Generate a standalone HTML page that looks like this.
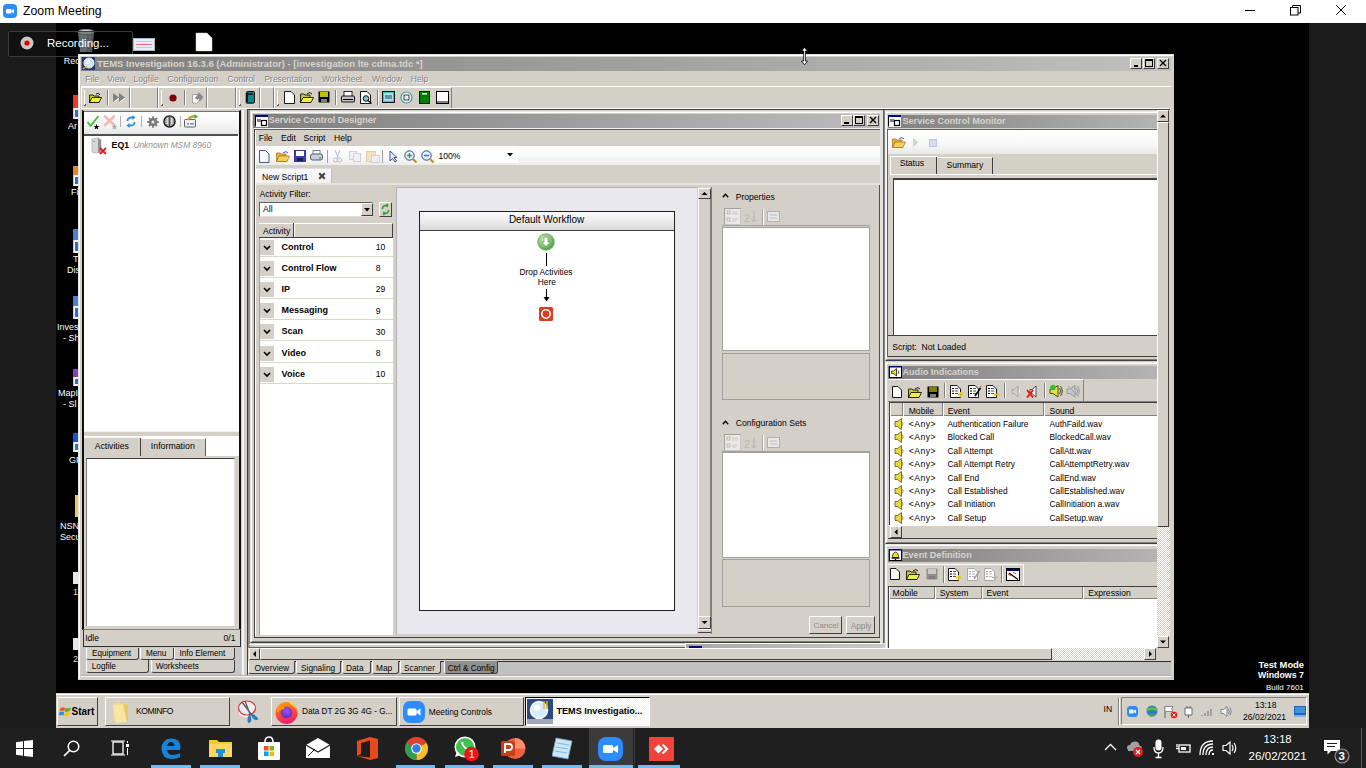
<!DOCTYPE html><html><head><meta charset="utf-8"><style>
html,body{margin:0;padding:0;width:1366px;height:768px;overflow:hidden;background:#000;}
body{position:relative;font-family:"Liberation Sans",sans-serif;}
div,span,svg{position:absolute;}
span{white-space:nowrap;}
</style></head><body>
<div style="left:0px;top:0px;width:1366px;height:23px;background:#fff"></div>
<div style="left:3px;top:4px;width:14px;height:14px;background:#2d8cff;border-radius:4px"></div>
<svg style="position:absolute;left:3px;top:4px;" width="14" height="14" viewBox="0 0 14 14"><rect x="3" y="5" width="5.5" height="4.5" rx="1" fill="#fff"/><path d="M8.5 6.5 L11 5 V9.5 L8.5 8 Z" fill="#fff"/></svg>
<span style="left:23px;top:5.39px;font-size:12.3px;line-height:12.3px;color:#000;">Zoom Meeting</span>
<div style="left:1245px;top:10px;width:10px;height:1px;background:#000"></div>
<svg style="position:absolute;left:1290px;top:5px;" width="11" height="11" viewBox="0 0 11 11"><rect x="0.5" y="2.5" width="7.5" height="7.5" fill="none" stroke="#000"/><path d="M2.5 2.5 V0.5 H10.5 V8 H8" fill="none" stroke="#000"/></svg>
<svg style="position:absolute;left:1336px;top:5px;" width="10" height="10" viewBox="0 0 10 10"><path d="M0.3 0.3 L9.7 9.7 M9.7 0.3 L0.3 9.7" stroke="#000" stroke-width="1"/></svg>
<div style="left:0px;top:23px;width:56px;height:705px;background:#1b1b1b"></div>
<div style="left:1309px;top:23px;width:57px;height:705px;background:#1b1b1b"></div>
<div style="left:56px;top:23px;width:1253px;height:670px;background:#000"></div>
<svg style="position:absolute;left:76px;top:28px;" width="20" height="25" viewBox="0 0 20 25"><path d="M2 4 L18 4 L16 24 L4 24 Z" fill="#9a9fa6"/><path d="M10 4 L18 4 L16 24 L10 24 Z" fill="#70757c" opacity="0.6"/><ellipse cx="10" cy="4" rx="8.3" ry="2.6" fill="#c8ccd2" stroke="#80848a" stroke-width="0.9"/><path d="M6 7 L7 20 M10 7 V21 M14 7 L13 20" stroke="#b8bec6" stroke-width="0.9"/></svg>
<span style="left:63.8px;top:56.58px;font-size:9px;line-height:9px;color:#fff;">Rec</span>
<div style="left:133px;top:38px;width:22px;height:13px;background:#e8eef6;border:1px solid #b0b8c8;box-sizing:border-box"></div>
<div style="left:136px;top:44px;width:16px;height:1px;background:#e07070"></div>
<div style="left:136px;top:41px;width:16px;height:1px;background:#c0cce0"></div>
<div style="left:136px;top:47px;width:16px;height:1px;background:#c0cce0"></div>
<svg style="position:absolute;left:195px;top:32px;" width="18" height="20" viewBox="0 0 18 20"><path d="M1 1 H12 L17 6 V19 H1 Z" fill="#fff" stroke="#ccc" stroke-width="0.5"/></svg>
<div style="left:73px;top:95px;width:5px;height:13px;background:#e83a2a"></div>
<div style="left:73px;top:108px;width:5px;height:11px;background:#f4f4f8;border-left:1px solid #c0c8d8;box-sizing:border-box"></div>
<div style="left:75px;top:110px;width:3px;height:7px;background:#2a70d0"></div>
<div style="left:73px;top:166px;width:5px;height:9px;background:#f08030"></div>
<div style="left:73px;top:175px;width:5px;height:11px;background:#f4f4f8;border-left:1px solid #c0c8d8;box-sizing:border-box"></div>
<div style="left:75px;top:177px;width:3px;height:7px;background:#2a70d0"></div>
<div style="left:73px;top:229px;width:5px;height:11px;background:#4a80d0"></div>
<div style="left:73px;top:240px;width:5px;height:13px;background:#f4f4f8;border-left:1px solid #c0c8d8;box-sizing:border-box"></div>
<div style="left:75px;top:242px;width:3px;height:9px;background:#2a70d0"></div>
<div style="left:73px;top:296px;width:5px;height:10px;background:#4a80d0"></div>
<div style="left:73px;top:306px;width:5px;height:13px;background:#f4f4f8;border-left:1px solid #c0c8d8;box-sizing:border-box"></div>
<div style="left:75px;top:308px;width:3px;height:9px;background:#2a70d0"></div>
<div style="left:73px;top:369px;width:5px;height:8px;background:#8a40b8"></div>
<div style="left:73px;top:377px;width:5px;height:9px;background:#f4f4f8;border-left:1px solid #c0c8d8;box-sizing:border-box"></div>
<div style="left:75px;top:379px;width:3px;height:5px;background:#2a70d0"></div>
<div style="left:73px;top:433px;width:5px;height:9px;background:#2050d0"></div>
<div style="left:73px;top:442px;width:5px;height:10px;background:#f4f4f8;border-left:1px solid #c0c8d8;box-sizing:border-box"></div>
<div style="left:75px;top:444px;width:3px;height:6px;background:#2a70d0"></div>
<div style="left:75px;top:495px;width:3px;height:22px;background:#e8c868"></div>
<div style="left:73px;top:572px;width:5px;height:12px;background:#e8e8e8"></div>
<div style="left:73px;top:638px;width:5px;height:12px;background:#e8e8e8"></div>
<span style="left:68px;top:122.38px;font-size:9px;line-height:9px;color:#fff;">Ar</span>
<span style="left:71px;top:188.38px;font-size:9px;line-height:9px;color:#fff;">Fi</span>
<span style="left:73px;top:255.38px;font-size:9px;line-height:9px;color:#fff;">T</span>
<span style="left:67px;top:266.38px;font-size:9px;line-height:9px;color:#fff;">Dis</span>
<span style="left:57px;top:323.38px;font-size:9px;line-height:9px;color:#fff;">Inves</span>
<span style="left:63px;top:334.38px;font-size:9px;line-height:9px;color:#fff;">- Sh</span>
<span style="left:58px;top:389.38px;font-size:9px;line-height:9px;color:#fff;">MapI</span>
<span style="left:63px;top:400.38px;font-size:9px;line-height:9px;color:#fff;">- Sl</span>
<span style="left:69px;top:456.38px;font-size:9px;line-height:9px;color:#fff;">GP</span>
<span style="left:60px;top:522.38px;font-size:9px;line-height:9px;color:#fff;">NSN</span>
<span style="left:60px;top:533.38px;font-size:9px;line-height:9px;color:#fff;">Secu</span>
<span style="left:73px;top:588.38px;font-size:9px;line-height:9px;color:#ddd;">1</span>
<span style="left:73px;top:654.88px;font-size:9px;line-height:9px;color:#ddd;">2</span>
<div style="left:8px;top:31px;width:125px;height:26px;background:rgba(0,0,0,0.35);border:1px solid #3a3a3a;border-radius:2px;box-sizing:border-box"></div>
<svg style="position:absolute;left:20px;top:36px;" width="14" height="14" viewBox="0 0 14 14"><circle cx="7" cy="7" r="6.5" fill="#c8c8c8"/><circle cx="7" cy="7" r="2.6" fill="#e00000"/></svg>
<span style="left:47px;top:37.57px;font-size:11.5px;line-height:11.5px;color:#fff;">Recording...</span>
<div style="left:78px;top:54px;width:1096px;height:626px;background:#d4d0c8;border-top:1px solid #e4e2dc;border-left:1px solid #e4e2dc;box-sizing:border-box"></div>
<div style="left:79px;top:55px;width:1094px;height:624px;border-top:1px solid #fff;border-left:1px solid #fff;box-sizing:border-box"></div>
<div style="left:81px;top:57px;width:1090px;height:14px;background:linear-gradient(90deg,#808080,#c0c0c0)"></div>
<svg style="position:absolute;left:82px;top:57px;" width="13" height="13" viewBox="0 0 13 13"><rect x="0" y="0" width="13" height="13" fill="#2a3a6a"/><circle cx="7" cy="6" r="5" fill="#cfe4f4" stroke="#f0f0f0" stroke-width="1"/><circle cx="6" cy="5" r="2" fill="#fff"/><path d="M1 12 L5 9" stroke="#e0b040" stroke-width="1.5"/></svg>
<span style="left:97px;top:59.16px;font-size:9.5px;line-height:9.5px;color:#d8d4cc;font-weight:bold;">TEMS Investigation 16.3.6 (Administrator) - [investigation lte cdma.tdc *]</span>
<div style="left:1130px;top:58px;width:12px;height:11px;background:#d4d0c8;border-top:1px solid #fff;border-left:1px solid #fff;border-right:1px solid #404040;border-bottom:1px solid #404040;box-sizing:border-box;"></div>
<div style="left:1143px;top:58px;width:12px;height:11px;background:#d4d0c8;border-top:1px solid #fff;border-left:1px solid #fff;border-right:1px solid #404040;border-bottom:1px solid #404040;box-sizing:border-box;"></div>
<div style="left:1157px;top:58px;width:12px;height:11px;background:#d4d0c8;border-top:1px solid #fff;border-left:1px solid #fff;border-right:1px solid #404040;border-bottom:1px solid #404040;box-sizing:border-box;"></div>
<svg style="position:absolute;left:1130px;top:58px;" width="12" height="11" viewBox="0 0 12 11"><rect x="4" y="7" width="4" height="2" fill="#000"/></svg>
<svg style="position:absolute;left:1143px;top:58px;" width="12" height="11" viewBox="0 0 12 11"><rect x="2.5" y="1.5" width="7" height="7" fill="none" stroke="#000"/><rect x="2" y="1" width="8" height="2" fill="#000"/></svg>
<svg style="position:absolute;left:1157px;top:58px;" width="12" height="11" viewBox="0 0 12 11"><path d="M3 2 L9 8 M9 2 L3 8" stroke="#000" stroke-width="1.4"/></svg>
<span style="left:85.89999999999999px;top:75.60px;font-size:8.5px;line-height:8.5px;color:#fff;">File</span>
<span style="left:85.3px;top:75.00px;font-size:8.5px;line-height:8.5px;color:#808080;">File</span>
<span style="left:107.89999999999999px;top:75.60px;font-size:8.5px;line-height:8.5px;color:#fff;">View</span>
<span style="left:107.3px;top:75.00px;font-size:8.5px;line-height:8.5px;color:#808080;">View</span>
<span style="left:134.2px;top:75.60px;font-size:8.5px;line-height:8.5px;color:#fff;">Logfile</span>
<span style="left:133.6px;top:75.00px;font-size:8.5px;line-height:8.5px;color:#808080;">Logfile</span>
<span style="left:168.2px;top:75.60px;font-size:8.5px;line-height:8.5px;color:#fff;">Configuration</span>
<span style="left:167.6px;top:75.00px;font-size:8.5px;line-height:8.5px;color:#808080;">Configuration</span>
<span style="left:228.2px;top:75.60px;font-size:8.5px;line-height:8.5px;color:#fff;">Control</span>
<span style="left:227.6px;top:75.00px;font-size:8.5px;line-height:8.5px;color:#808080;">Control</span>
<span style="left:265.0px;top:75.60px;font-size:8.5px;line-height:8.5px;color:#fff;">Presentation</span>
<span style="left:264.4px;top:75.00px;font-size:8.5px;line-height:8.5px;color:#808080;">Presentation</span>
<span style="left:322.6px;top:75.60px;font-size:8.5px;line-height:8.5px;color:#fff;">Worksheet</span>
<span style="left:322px;top:75.00px;font-size:8.5px;line-height:8.5px;color:#808080;">Worksheet</span>
<span style="left:372.6px;top:75.60px;font-size:8.5px;line-height:8.5px;color:#fff;">Window</span>
<span style="left:372px;top:75.00px;font-size:8.5px;line-height:8.5px;color:#808080;">Window</span>
<span style="left:411.40000000000003px;top:75.60px;font-size:8.5px;line-height:8.5px;color:#fff;">Help</span>
<span style="left:410.8px;top:75.00px;font-size:8.5px;line-height:8.5px;color:#808080;">Help</span>
<div style="left:81px;top:86px;width:1090px;height:1px;background:#fff"></div>
<div style="left:81px;top:87px;width:49px;height:21px;border-top:1px solid #fff;border-left:1px solid #fff;border-right:1px solid #808080;box-sizing:border-box"></div>
<div style="left:84px;top:90px;width:1px;height:16px;background:#fff"></div>
<div style="left:85px;top:104px;width:1px;height:2px;background:#606060"></div>
<div style="left:84px;top:105px;width:2px;height:1px;background:#606060"></div>
<div style="left:130px;top:87px;width:28px;height:21px;border-top:1px solid #fff;border-left:1px solid #fff;border-right:1px solid #808080;box-sizing:border-box"></div>
<div style="left:158px;top:87px;width:49px;height:21px;border-top:1px solid #fff;border-left:1px solid #fff;border-right:1px solid #808080;box-sizing:border-box"></div>
<div style="left:161px;top:90px;width:1px;height:16px;background:#fff"></div>
<div style="left:162px;top:104px;width:1px;height:2px;background:#606060"></div>
<div style="left:161px;top:105px;width:2px;height:1px;background:#606060"></div>
<div style="left:207px;top:87px;width:29px;height:21px;border-top:1px solid #fff;border-left:1px solid #fff;border-right:1px solid #808080;box-sizing:border-box"></div>
<div style="left:236px;top:87px;width:24px;height:21px;border-top:1px solid #fff;border-left:1px solid #fff;border-right:1px solid #808080;box-sizing:border-box"></div>
<div style="left:239px;top:90px;width:1px;height:16px;background:#fff"></div>
<div style="left:240px;top:104px;width:1px;height:2px;background:#606060"></div>
<div style="left:239px;top:105px;width:2px;height:1px;background:#606060"></div>
<div style="left:260px;top:87px;width:14px;height:21px;border-top:1px solid #fff;border-left:1px solid #fff;border-right:1px solid #808080;box-sizing:border-box"></div>
<div style="left:274px;top:87px;width:178px;height:21px;border-top:1px solid #fff;border-left:1px solid #fff;border-right:1px solid #808080;box-sizing:border-box"></div>
<div style="left:277px;top:90px;width:1px;height:16px;background:#fff"></div>
<div style="left:278px;top:104px;width:1px;height:2px;background:#606060"></div>
<div style="left:277px;top:105px;width:2px;height:1px;background:#606060"></div>
<div style="left:81px;top:108px;width:1090px;height:1px;background:#fff"></div>
<svg style="position:absolute;left:89px;top:92px;" width="13" height="11" viewBox="0 0 13 11"><path d="M0.5 3 H4 L5 4 H10 V10.5 H0.5 Z" fill="#c8c820" stroke="#000" stroke-width="0.8"/><path d="M0.5 10.5 L3 5.5 H12.5 L10 10.5 Z" fill="#f0f040" stroke="#000" stroke-width="0.8"/><path d="M7 2 Q10 0 11 3" stroke="#000" fill="none" stroke-width="0.9"/></svg>
<div style="left:107px;top:90px;width:2px;height:15px;border-left:1px solid #808080;border-right:1px solid #fff;box-sizing:border-box"></div>
<svg style="position:absolute;left:113px;top:92px;" width="13" height="11" viewBox="0 0 13 11"><path d="M0 1 L6 5.5 L0 10 Z M6 1 L12 5.5 L6 10 Z" fill="#808080"/><path d="M1 10 L6 6 M7 10 L12 6" stroke="#fff" stroke-width="0.8"/></svg>
<svg style="position:absolute;left:169px;top:94px;" width="8" height="8" viewBox="0 0 8 8"><circle cx="4" cy="4" r="3.6" fill="#800000"/></svg>
<div style="left:184px;top:90px;width:2px;height:15px;border-left:1px solid #808080;border-right:1px solid #fff;box-sizing:border-box"></div>
<svg style="position:absolute;left:191px;top:91px;" width="13" height="13" viewBox="0 0 13 13"><path d="M1.5 3.5 H7 V12 H1.5 Z" fill="#fff" stroke="#a0a0a0" stroke-width="0.9"/><path d="M4 7 L8 1.5 L12.5 6 L9 10.5 Z" fill="#8a8a8a"/><path d="M5 12 L8 8" stroke="#fff" stroke-width="1"/></svg>
<svg style="position:absolute;left:245px;top:91px;" width="10" height="13" viewBox="0 0 10 13"><path d="M1 12.5 H8.5 M0.8 2 V12" stroke="#e040e0" stroke-width="1"/><rect x="1.5" y="0.5" width="8" height="11.5" rx="1" fill="#108888" stroke="#000" stroke-width="0.9"/><rect x="3" y="2.5" width="5" height="1.2" fill="#000"/><path d="M2.5 1.5 V11" stroke="#000" stroke-width="0.8"/></svg>
<svg style="position:absolute;left:284px;top:91px;" width="11" height="13" viewBox="0 0 11 13"><path d="M0.5 0.5 H7 L10.5 4 V12.5 H0.5 Z" fill="#fff" stroke="#000" stroke-width="0.9"/></svg>
<svg style="position:absolute;left:300px;top:91px;" width="14" height="12" viewBox="0 0 14 12"><path d="M0.5 3 H4 L5 4 H10 V11.5 H0.5 Z" fill="#c8c820" stroke="#000" stroke-width="0.8"/><path d="M0.5 11.5 L3 6.5 H13.5 L11 11.5 Z" fill="#f0f040" stroke="#000" stroke-width="0.8"/><path d="M7 3 Q10 0 12 3" stroke="#000" fill="none" stroke-width="0.9"/></svg>
<svg style="position:absolute;left:318px;top:91px;" width="12" height="12" viewBox="0 0 12 12"><rect x="0.5" y="0.5" width="11" height="11" fill="#000"/><rect x="2" y="1" width="8" height="5" fill="#c0c000"/><rect x="3" y="8" width="6" height="3" fill="#808080"/></svg>
<div style="left:335px;top:90px;width:2px;height:15px;border-left:1px solid #808080;border-right:1px solid #fff;box-sizing:border-box"></div>
<svg style="position:absolute;left:341px;top:91px;" width="14" height="13" viewBox="0 0 14 13"><rect x="3" y="0.5" width="8" height="5" fill="#fff" stroke="#000" stroke-width="0.8"/><rect x="0.5" y="5" width="13" height="6" rx="1" fill="#c0c0c0" stroke="#000" stroke-width="0.9"/><rect x="2" y="8" width="10" height="1" fill="#000"/></svg>
<svg style="position:absolute;left:360px;top:91px;" width="12" height="13" viewBox="0 0 12 13"><path d="M0.5 0.5 H7 L10.5 4 V12.5 H0.5 Z" fill="#fff" stroke="#000" stroke-width="0.9"/><circle cx="6" cy="7.5" r="2.8" fill="#80c0d0" stroke="#000" stroke-width="0.9"/><path d="M8 9.5 L11.5 12.5" stroke="#000" stroke-width="1.3"/></svg>
<div style="left:377px;top:90px;width:2px;height:15px;border-left:1px solid #808080;border-right:1px solid #fff;box-sizing:border-box"></div>
<svg style="position:absolute;left:382px;top:91px;" width="13" height="12" viewBox="0 0 13 12"><rect x="0.5" y="0.5" width="12" height="11" fill="#40c0d0" stroke="#000" stroke-width="0.9"/><rect x="2" y="2" width="9" height="8" fill="#a0e0e8"/><path d="M3 5 H10 M3 7 H10" stroke="#000" stroke-width="0.7"/></svg>
<svg style="position:absolute;left:400px;top:91px;" width="13" height="13" viewBox="0 0 13 13"><circle cx="6.5" cy="6.5" r="5.5" fill="#e8f0f0" stroke="#40a0a0" stroke-width="1.2"/><path d="M4 4 H9 V9 H4 Z" fill="none" stroke="#000" stroke-width="0.7"/></svg>
<svg style="position:absolute;left:419px;top:91px;" width="11" height="13" viewBox="0 0 11 13"><rect x="0.5" y="0.5" width="10" height="12" fill="#008000" stroke="#000" stroke-width="0.9"/><rect x="3" y="2" width="5" height="1.5" fill="#fff"/></svg>
<svg style="position:absolute;left:436px;top:91px;" width="13" height="13" viewBox="0 0 13 13"><rect x="0.5" y="0.5" width="12" height="12" fill="#fff" stroke="#000" stroke-width="1"/><rect x="1" y="10" width="11" height="2" fill="#808080"/></svg>
<div style="left:82px;top:110px;width:159px;height:520px;border:2px solid #101010;border-top:1px solid #d4d0c8;box-sizing:border-box;background:#fff"></div>
<div style="left:84px;top:111px;width:155px;height:1px;background:#707070"></div>
<div style="left:84px;top:112px;width:155px;height:23px;background:linear-gradient(180deg,#ffffff 0%,#f4f4f4 60%,#e4e4e4 100%)"></div>
<div style="left:84px;top:134px;width:154px;height:2px;background:#505050"></div>
<svg style="position:absolute;left:86px;top:114px;" width="14" height="15" viewBox="0 0 14 15"><path d="M1.5 8 L4.5 12 L12.5 2" stroke="#40c040" stroke-width="1.9" fill="none" stroke-linejoin="round"/><g transform="translate(10.5 12) scale(1.5) translate(-10.5 -12)"><path d="M10.5 10.5 L11 12 L12.6 12 L11.3 12.9 L11.8 14.4 L10.5 13.5 L9.2 14.4 L9.7 12.9 L8.4 12 L10 12 Z" fill="#000"/></g></svg>
<svg style="position:absolute;left:103px;top:114px;" width="14" height="15" viewBox="0 0 14 15"><path d="M2 2.5 L11 11 M11 2.5 L2 11" stroke="#f4b8b8" stroke-width="2.6" stroke-linecap="round"/><g transform="translate(11.5 12) scale(1.5) translate(-11.5 -12)"><path d="M11.5 10.5 L12 12 L13.6 12 L12.3 12.9 L12.8 14.4 L11.5 13.5 L10.2 14.4 L10.7 12.9 L9.4 12 L11 12 Z" fill="#a8a8a8"/></g></svg>
<div style="left:120px;top:116px;width:1px;height:11px;background:#b0b0b0"></div>
<svg style="position:absolute;left:126px;top:115px;" width="10" height="13" viewBox="0 0 10 13"><path d="M1.5 6 Q1.5 2.5 5.5 2.5 L7 2.5" stroke="#2a90e0" stroke-width="1.8" fill="none"/><path d="M6.5 0 L9.5 2.5 L6.5 5 Z" fill="#2a90e0"/><path d="M8.5 7 Q8.5 10.5 4.5 10.5 L3 10.5" stroke="#2a90e0" stroke-width="1.8" fill="none"/><path d="M3.5 8 L0.5 10.5 L3.5 13 Z" fill="#2a90e0"/></svg>
<div style="left:141px;top:116px;width:1px;height:11px;background:#b0b0b0"></div>
<svg style="position:absolute;left:147px;top:116px;" width="12" height="12" viewBox="0 0 12 12"><path d="M11.73 5.09 L11.73 6.91 L10.08 6.98 L9.58 8.19 L10.69 9.41 L9.41 10.69 L8.19 9.58 L6.98 10.08 L6.91 11.73 L5.09 11.73 L5.02 10.08 L3.81 9.58 L2.59 10.69 L1.31 9.41 L2.42 8.19 L1.92 6.98 L0.27 6.91 L0.27 5.09 L1.92 5.02 L2.42 3.81 L1.31 2.59 L2.59 1.31 L3.81 2.42 L5.02 1.92 L5.09 0.27 L6.91 0.27 L6.98 1.92 L8.19 2.42 L9.41 1.31 L10.69 2.59 L9.58 3.81 L10.08 5.02 Z" fill="#7a7a7a"/><circle cx="6" cy="6" r="1.6" fill="#e8e8e8"/></svg>
<svg style="position:absolute;left:163px;top:115px;" width="13" height="13" viewBox="0 0 13 13"><circle cx="6.5" cy="6.5" r="5.6" fill="#a0a0a0" stroke="#101010" stroke-width="1.3"/><path d="M4.3 3 V10 M8.7 3 V10" stroke="#f4f4f4" stroke-width="1.4" stroke-dasharray="1.4 0.9"/><path d="M6.5 1 V12" stroke="#404040" stroke-width="0.9"/></svg>
<div style="left:180px;top:116px;width:1px;height:11px;background:#b0b0b0"></div>
<svg style="position:absolute;left:184px;top:114px;" width="14" height="14" viewBox="0 0 14 14"><rect x="0.5" y="5.5" width="11" height="7.5" rx="1" fill="#eef0f8" stroke="#505050" stroke-width="0.9"/><rect x="3" y="9" width="2" height="1.5" fill="#8090b0"/><rect x="6" y="9" width="4" height="1.5" fill="#8090b0"/><path d="M4 6 Q6 2 11 2.5" stroke="#c8a030" stroke-width="2.4" fill="none"/><path d="M10.5 0 L14 2.5 L10.5 5 Z" fill="#40b040"/></svg>
<svg style="position:absolute;left:89px;top:137px;" width="19" height="18" viewBox="0 0 19 18"><path d="M3 2 L9 1 L12 3 V15 L6 16 L3 15 Z" fill="#d8d8d8" stroke="#a0a0a0" stroke-width="0.6"/><path d="M9 1 L12 3 V15 L9 16 Z" fill="#909090"/><rect x="4" y="4" width="2" height="1" fill="#70c040"/><path d="M11 11 L17 17 M17 11 L11 17" stroke="#e02020" stroke-width="1.8"/></svg>
<span style="left:111.6px;top:140.94px;font-size:8.7px;line-height:8.7px;color:#000;font-weight:bold;">EQ1</span>
<span style="left:133.4px;top:141.19px;font-size:8.4px;line-height:8.4px;color:#909090;font-style:italic;">Unknown MSM 8960</span>
<div style="left:84px;top:431px;width:155px;height:5px;background:#d4d0c8;border-top:1px solid #f0f0f0;box-sizing:border-box"></div>
<div style="left:84px;top:436px;width:155px;height:22px;background:#fff"></div>
<div style="left:84px;top:437px;width:56px;height:21px;background:#d4d0c8;border-top:1px solid #f4f4f4;box-sizing:border-box"></div>
<div style="left:140px;top:438px;width:1px;height:18px;background:#404040"></div>
<div style="left:141px;top:438px;width:65px;height:18px;background:#d4d0c8;border-top:1px solid #fff;border-right:1px solid #606060;box-sizing:border-box"></div>
<span style="left:94.8px;top:441.72px;font-size:8.6px;line-height:8.6px;color:#000;">Activities</span>
<span style="left:150.8px;top:441.55px;font-size:8.8px;line-height:8.8px;color:#000;">Information</span>
<div style="left:84px;top:456px;width:155px;height:3px;background:#d4d0c8"></div>
<div style="left:84px;top:458px;width:155px;height:171px;background:#d4d0c8"></div>
<div style="left:86px;top:458px;width:149px;height:168px;background:#fff;border-top:1px solid #404040;border-left:1px solid #808080;border-right:1px solid #e0e0e0;box-sizing:border-box"></div>
<div style="left:84px;top:626px;width:155px;height:3px;background:#d4d0c8"></div>
<div style="left:83px;top:629px;width:158px;height:18px;background:#d4d0c8;border-top:1px solid #808080;border-bottom:1px solid #303030;border-left:1px solid #303030;border-right:1px solid #303030;box-sizing:border-box"></div>
<span style="left:85.2px;top:634.22px;font-size:8.6px;line-height:8.6px;color:#000;">Idle</span>
<span style="left:223.5px;top:634.22px;font-size:8.6px;line-height:8.6px;color:#000;">0/1</span>
<div style="left:81px;top:647px;width:166px;height:28px;background:#c8c8c8"></div>
<div style="left:234px;top:647px;width:7px;height:28px;background:#c8c8c8"></div>
<div style="left:86px;top:648px;width:53px;height:12px;background:#d4d0c8;border-left:1px solid #fff;border-right:1px solid #404040;border-bottom:1px solid #404040;border-radius:0 0 3px 3px;box-sizing:border-box"></div>
<span style="left:92px;top:650.36px;font-size:8.2px;line-height:8.2px;color:#000;">Equipment</span>
<div style="left:140px;top:648px;width:34px;height:12px;background:#d4d0c8;border-left:1px solid #fff;border-right:1px solid #404040;border-bottom:1px solid #404040;border-radius:0 0 3px 3px;box-sizing:border-box"></div>
<span style="left:145.9px;top:650.36px;font-size:8.2px;line-height:8.2px;color:#000;">Menu</span>
<div style="left:174px;top:648px;width:61px;height:12px;background:#d4d0c8;border-left:1px solid #fff;border-right:1px solid #404040;border-bottom:1px solid #404040;border-radius:0 0 3px 3px;box-sizing:border-box"></div>
<span style="left:179.4px;top:650.36px;font-size:8.2px;line-height:8.2px;color:#000;">Info Element</span>
<div style="left:86px;top:660px;width:63px;height:13px;background:#d4d0c8;border-left:1px solid #fff;border-right:1px solid #404040;border-bottom:1px solid #404040;border-radius:0 0 3px 3px;box-sizing:border-box"></div>
<span style="left:91.8px;top:663.36px;font-size:8.2px;line-height:8.2px;color:#000;">Logfile</span>
<div style="left:151px;top:660px;width:84px;height:13px;background:#d4d0c8;border-left:1px solid #fff;border-right:1px solid #404040;border-bottom:1px solid #404040;border-radius:0 0 3px 3px;box-sizing:border-box"></div>
<span style="left:155.7px;top:663.36px;font-size:8.2px;line-height:8.2px;color:#000;">Worksheets</span>
<div style="left:241px;top:109px;width:930px;height:571px;background:#d4d0c8"></div>
<div style="left:247px;top:109px;width:923px;height:1px;background:#404040"></div>
<div style="left:247px;top:109px;width:1px;height:566px;background:#404040"></div>
<div style="left:248px;top:110px;width:2px;height:538px;background:#8c8c8c"></div>
<div style="left:242px;top:110px;width:2px;height:565px;background:#f4f4f4"></div>
<div style="left:250px;top:111px;width:634px;height:532px;background:#d4d0c8;border-top:1px solid #e8e8e8;border-left:1px solid #e8e8e8;border-right:1px solid #404040;border-bottom:1px solid #404040;box-sizing:border-box"></div>
<div style="left:251px;top:112px;width:632px;height:530px;border-top:1px solid #fff;border-left:1px solid #fff;border-right:1px solid #808080;border-bottom:1px solid #808080;box-sizing:border-box"></div>
<div style="left:253px;top:114px;width:627px;height:14px;background:linear-gradient(90deg,#808080 0%,#bcbcc0 100%)"></div>
<svg style="position:absolute;left:255px;top:115px;" width="13" height="12" viewBox="0 0 13 12"><rect x="0" y="0" width="13" height="12" fill="#fff"/><rect x="0" y="0" width="13" height="2" fill="#0000a0"/><path d="M0.5 2 V11.5" stroke="#000"/><rect x="2" y="4" width="4" height="3" fill="#808080"/><rect x="6.5" y="5.5" width="5" height="5" fill="#fff" stroke="#000" stroke-width="1.2"/></svg>
<span style="left:268.7px;top:116.38px;font-size:9.0px;line-height:9.0px;color:#d8d4cc;font-weight:bold;">Service Control Designer</span>
<div style="left:841px;top:115px;width:12px;height:11px;background:#d4d0c8;border-top:1px solid #fff;border-left:1px solid #fff;border-right:1px solid #404040;border-bottom:1px solid #404040;box-sizing:border-box;"></div>
<div style="left:853px;top:115px;width:12px;height:11px;background:#d4d0c8;border-top:1px solid #fff;border-left:1px solid #fff;border-right:1px solid #404040;border-bottom:1px solid #404040;box-sizing:border-box;"></div>
<div style="left:867px;top:115px;width:12px;height:11px;background:#d4d0c8;border-top:1px solid #fff;border-left:1px solid #fff;border-right:1px solid #404040;border-bottom:1px solid #404040;box-sizing:border-box;"></div>
<svg style="position:absolute;left:841px;top:115px;" width="12" height="11" viewBox="0 0 12 11"><rect x="3" y="7" width="5" height="2" fill="#000"/></svg>
<svg style="position:absolute;left:853px;top:115px;" width="12" height="11" viewBox="0 0 12 11"><rect x="2.5" y="1.5" width="7" height="7" fill="none" stroke="#000"/><rect x="2" y="1" width="8" height="2" fill="#000"/></svg>
<svg style="position:absolute;left:867px;top:115px;" width="12" height="11" viewBox="0 0 12 11"><path d="M3 2 L9 8 M9 2 L3 8" stroke="#000" stroke-width="1.4"/></svg>
<div style="left:254px;top:128px;width:626px;height:1px;background:#f0f0f0"></div>
<div style="left:254px;top:129px;width:626px;height:1px;background:#606060"></div>
<span style="left:258.8px;top:133.72px;font-size:8.6px;line-height:8.6px;color:#000;">File</span>
<span style="left:281px;top:133.72px;font-size:8.6px;line-height:8.6px;color:#000;">Edit</span>
<span style="left:303.5px;top:133.72px;font-size:8.6px;line-height:8.6px;color:#000;">Script</span>
<span style="left:334px;top:133.72px;font-size:8.6px;line-height:8.6px;color:#000;">Help</span>
<div style="left:254px;top:146px;width:626px;height:19px;background:linear-gradient(180deg,#ffffff 0%,#fafafa 50%,#ececec 100%)"></div>
<svg style="position:absolute;left:259px;top:150px;" width="11" height="13" viewBox="0 0 11 13"><path d="M0.5 0.5 H6.5 L10 4 V12.5 H0.5 Z" fill="#f8f8ff" stroke="#203060" stroke-width="0.8"/></svg>
<svg style="position:absolute;left:276px;top:150px;" width="14" height="12" viewBox="0 0 14 12"><path d="M0.5 3 H4 L5 4 H10 V11.5 H0.5 Z" fill="#e0b040" stroke="#a07010" stroke-width="0.7"/><path d="M0.5 11.5 L3 6 H13.5 L11 11.5 Z" fill="#f8d060" stroke="#a07010" stroke-width="0.7"/><path d="M7 3 Q10 0 12 3" stroke="#3060c0" fill="none" stroke-width="1"/></svg>
<svg style="position:absolute;left:294px;top:150px;" width="12" height="12" viewBox="0 0 12 12"><rect x="0.5" y="0.5" width="11" height="11" fill="#3040c0" stroke="#202080" stroke-width="0.8"/><rect x="2" y="1" width="8" height="5" fill="#fff"/><rect x="3" y="8" width="6" height="3" fill="#202040"/></svg>
<svg style="position:absolute;left:310px;top:150px;" width="13" height="12" viewBox="0 0 13 12"><rect x="3" y="0.5" width="7" height="4" fill="#fff" stroke="#606080" stroke-width="0.8"/><rect x="0.5" y="4" width="12" height="6" rx="2" fill="#c8d0e0" stroke="#404860" stroke-width="0.9"/><circle cx="10" cy="8" r="1" fill="#30c030"/></svg>
<div style="left:327px;top:150px;width:1px;height:13px;background:#a0a0a0"></div>
<svg style="position:absolute;left:333px;top:150px;" width="9" height="13" viewBox="0 0 9 13"><path d="M2 0 L5 8 M7 0 L4 8" stroke="#b8c0d0" stroke-width="1"/><circle cx="2.5" cy="10" r="2" fill="none" stroke="#b8c0d0"/><circle cx="6.5" cy="10" r="2" fill="none" stroke="#b8c0d0"/></svg>
<svg style="position:absolute;left:349px;top:151px;" width="13" height="11" viewBox="0 0 13 11"><rect x="0.5" y="0.5" width="7" height="8" fill="#f0f0f0" stroke="#d0d0d8"/><rect x="4.5" y="2.5" width="7" height="8" fill="#f0f0f0" stroke="#d0d0d8"/></svg>
<svg style="position:absolute;left:366px;top:150px;" width="14" height="13" viewBox="0 0 14 13"><rect x="0.5" y="1.5" width="9" height="10" fill="#f0e4c0" stroke="#e0d0b0"/><rect x="5.5" y="5.5" width="8" height="7" fill="#f0f0f0" stroke="#d0d0d8"/></svg>
<div style="left:382px;top:150px;width:1px;height:13px;background:#a0a0a0"></div>
<svg style="position:absolute;left:389px;top:150px;" width="9" height="13" viewBox="0 0 9 13"><path d="M1 1 V11 L3.5 8.5 L6 12 L7.5 11 L5 7.5 L8 7.5 Z" fill="#e8eef8" stroke="#304070" stroke-width="0.9"/></svg>
<svg style="position:absolute;left:404px;top:150px;" width="13" height="13" viewBox="0 0 13 13"><circle cx="5.5" cy="5.5" r="4.7" fill="#e0f0ff" stroke="#304880" stroke-width="1"/><path d="M3 5.5 H8 M5.5 3 V8" stroke="#30a030" stroke-width="1.3"/><path d="M9 9 L12.5 12.5" stroke="#c09020" stroke-width="2"/></svg>
<svg style="position:absolute;left:421px;top:150px;" width="13" height="13" viewBox="0 0 13 13"><circle cx="5.5" cy="5.5" r="4.7" fill="#e0f0ff" stroke="#304880" stroke-width="1"/><path d="M3 5.5 H8" stroke="#3060c0" stroke-width="1.3"/><path d="M9 9 L12.5 12.5" stroke="#c09020" stroke-width="2"/></svg>
<div style="left:436px;top:147px;width:82px;height:16px;background:#fff"></div>
<span style="left:438.5px;top:152.02px;font-size:8.6px;line-height:8.6px;color:#000;">100%</span>
<svg style="position:absolute;left:507px;top:153px;" width="6" height="4" viewBox="0 0 6 4"><path d="M0 0 H6 L3 3.5 Z" fill="#000"/></svg>
<div style="left:254px;top:165px;width:626px;height:19px;background:#d4d0c8"></div>
<div style="left:256px;top:168px;width:76px;height:16px;background:linear-gradient(180deg,#fafafa,#f0f0f0);border-top:1px solid #e0e0e0;border-right:1px solid #c0c0c0;box-sizing:border-box"></div>
<span style="left:262px;top:172.52px;font-size:8.6px;line-height:8.6px;color:#000;">New Script1</span>
<svg style="position:absolute;left:318px;top:172px;" width="8" height="8" viewBox="0 0 8 8"><path d="M1.2 1.2 L6.8 6.8 M6.8 1.2 L1.2 6.8" stroke="#404040" stroke-width="2"/></svg>
<div style="left:254px;top:183px;width:626px;height:2px;background:#e6e4de"></div>
<span style="left:259.6px;top:189.72px;font-size:8.6px;line-height:8.6px;color:#000;">Activity Filter:</span>
<div style="left:259px;top:202px;width:114px;height:15px;background:#fff;border-top:1px solid #606060;border-left:1px solid #606060;border-right:1px solid #e0e0e0;border-bottom:1px solid #e0e0e0;box-sizing:border-box"></div>
<span style="left:263px;top:205.32px;font-size:8.6px;line-height:8.6px;color:#000;">All</span>
<div style="left:361px;top:203px;width:12px;height:13px;background:#d4d0c8;border-top:1px solid #fff;border-left:1px solid #fff;border-right:1px solid #404040;border-bottom:1px solid #404040;box-sizing:border-box;"></div>
<svg style="position:absolute;left:361px;top:203px;" width="12" height="13" viewBox="0 0 12 13"><path d="M3 5 H9 L6 8.5 Z" fill="#000"/></svg>
<div style="left:379px;top:202px;width:13px;height:15px;background:#d4d0c8;border-top:1px solid #fff;border-left:1px solid #fff;border-right:1px solid #404040;border-bottom:1px solid #404040;box-sizing:border-box;"></div>
<svg style="position:absolute;left:379px;top:202px;" width="13" height="15" viewBox="0 0 13 15"><path d="M3.5 7 Q3.5 3.5 7 3.5 L9 3.5 M9 3.5 L7.5 2 M9 3.5 L7.5 5" stroke="#30a030" stroke-width="1.5" fill="none"/><path d="M9.5 8 Q9.5 11.5 6 11.5 L4 11.5 M4 11.5 L5.5 10 M4 11.5 L5.5 13" stroke="#30a030" stroke-width="1.5" fill="none"/></svg>
<div style="left:259px;top:223px;width:134px;height:412px;background:#fff;border-left:1px solid #a0a0a0;box-sizing:border-box"></div>
<div style="left:259px;top:223px;width:134px;height:15px;background:#d4d0c8;border-top:1px solid #fff;border-bottom:1px solid #404040;border-right:1px solid #404040;box-sizing:border-box"></div>
<div style="left:293px;top:223px;width:1px;height:15px;background:#404040"></div>
<div style="left:294px;top:224px;width:1px;height:13px;background:#fff"></div>
<span style="left:263px;top:226.52px;font-size:8.6px;line-height:8.6px;color:#000;">Activity</span>
<div style="left:260px;top:240px;width:133px;height:16px;background:#fff"></div>
<div style="left:260px;top:240px;width:14px;height:15px;background:#d4d0c8"></div>
<svg style="position:absolute;left:263px;top:245px;" width="8" height="6" viewBox="0 0 8 6"><path d="M1 1 L4 4 L7 1" stroke="#000" stroke-width="1.6" fill="none"/></svg>
<div style="left:260px;top:256px;width:133px;height:1px;background:#d8dcc4"></div>
<span style="left:281.6px;top:242.58px;font-size:9px;line-height:9px;color:#000;font-weight:bold;">Control</span>
<span style="left:375.8px;top:242.92px;font-size:8.6px;line-height:8.6px;color:#000;">10</span>
<div style="left:260px;top:261px;width:133px;height:16px;background:#fff"></div>
<div style="left:260px;top:261px;width:14px;height:15px;background:#d4d0c8"></div>
<svg style="position:absolute;left:263px;top:266px;" width="8" height="6" viewBox="0 0 8 6"><path d="M1 1 L4 4 L7 1" stroke="#000" stroke-width="1.6" fill="none"/></svg>
<div style="left:260px;top:277px;width:133px;height:1px;background:#d8dcc4"></div>
<span style="left:281.6px;top:263.78px;font-size:9px;line-height:9px;color:#000;font-weight:bold;">Control Flow</span>
<span style="left:375.8px;top:264.12px;font-size:8.6px;line-height:8.6px;color:#000;">8</span>
<div style="left:260px;top:282px;width:133px;height:16px;background:#fff"></div>
<div style="left:260px;top:282px;width:14px;height:15px;background:#d4d0c8"></div>
<svg style="position:absolute;left:263px;top:287px;" width="8" height="6" viewBox="0 0 8 6"><path d="M1 1 L4 4 L7 1" stroke="#000" stroke-width="1.6" fill="none"/></svg>
<div style="left:260px;top:298px;width:133px;height:1px;background:#d8dcc4"></div>
<span style="left:281.6px;top:284.98px;font-size:9px;line-height:9px;color:#000;font-weight:bold;">IP</span>
<span style="left:375.8px;top:285.32px;font-size:8.6px;line-height:8.6px;color:#000;">29</span>
<div style="left:260px;top:303px;width:133px;height:16px;background:#fff"></div>
<div style="left:260px;top:303px;width:14px;height:15px;background:#d4d0c8"></div>
<svg style="position:absolute;left:263px;top:308px;" width="8" height="6" viewBox="0 0 8 6"><path d="M1 1 L4 4 L7 1" stroke="#000" stroke-width="1.6" fill="none"/></svg>
<div style="left:260px;top:319px;width:133px;height:1px;background:#d8dcc4"></div>
<span style="left:281.6px;top:306.18px;font-size:9px;line-height:9px;color:#000;font-weight:bold;">Messaging</span>
<span style="left:375.8px;top:306.52px;font-size:8.6px;line-height:8.6px;color:#000;">9</span>
<div style="left:260px;top:324px;width:133px;height:16px;background:#fff"></div>
<div style="left:260px;top:324px;width:14px;height:15px;background:#d4d0c8"></div>
<svg style="position:absolute;left:263px;top:329px;" width="8" height="6" viewBox="0 0 8 6"><path d="M1 1 L4 4 L7 1" stroke="#000" stroke-width="1.6" fill="none"/></svg>
<div style="left:260px;top:340px;width:133px;height:1px;background:#d8dcc4"></div>
<span style="left:281.6px;top:327.38px;font-size:9px;line-height:9px;color:#000;font-weight:bold;">Scan</span>
<span style="left:375.8px;top:327.72px;font-size:8.6px;line-height:8.6px;color:#000;">30</span>
<div style="left:260px;top:346px;width:133px;height:16px;background:#fff"></div>
<div style="left:260px;top:346px;width:14px;height:15px;background:#d4d0c8"></div>
<svg style="position:absolute;left:263px;top:351px;" width="8" height="6" viewBox="0 0 8 6"><path d="M1 1 L4 4 L7 1" stroke="#000" stroke-width="1.6" fill="none"/></svg>
<div style="left:260px;top:362px;width:133px;height:1px;background:#d8dcc4"></div>
<span style="left:281.6px;top:348.58px;font-size:9px;line-height:9px;color:#000;font-weight:bold;">Video</span>
<span style="left:375.8px;top:348.92px;font-size:8.6px;line-height:8.6px;color:#000;">8</span>
<div style="left:260px;top:367px;width:133px;height:16px;background:#fff"></div>
<div style="left:260px;top:367px;width:14px;height:15px;background:#d4d0c8"></div>
<svg style="position:absolute;left:263px;top:372px;" width="8" height="6" viewBox="0 0 8 6"><path d="M1 1 L4 4 L7 1" stroke="#000" stroke-width="1.6" fill="none"/></svg>
<div style="left:260px;top:383px;width:133px;height:1px;background:#d8dcc4"></div>
<span style="left:281.6px;top:369.78px;font-size:9px;line-height:9px;color:#000;font-weight:bold;">Voice</span>
<span style="left:375.8px;top:370.12px;font-size:8.6px;line-height:8.6px;color:#000;">10</span>
<div style="left:393px;top:186px;width:3px;height:450px;background:#d4d0c8"></div>
<div style="left:396px;top:187px;width:301px;height:447px;background:#e9e8ee;border-top:1px solid #b4b4b4;border-left:1px solid #b4b4b4;box-sizing:border-box"></div>
<div style="left:419px;top:211px;width:256px;height:400px;background:#fff;border:1px solid #202020;box-sizing:border-box"></div>
<div style="left:420px;top:212px;width:254px;height:18px;background:linear-gradient(180deg,#fafafa 0%,#f0f0f0 40%,#d8d8d8 100%)"></div>
<div style="left:420px;top:230px;width:254px;height:1px;background:#404040"></div>
<span style="left:508.9px;top:215.03px;font-size:10px;line-height:10px;color:#000;">Default Workflow</span>
<svg style="position:absolute;left:537px;top:233px;" width="18" height="18" viewBox="0 0 18 18"><defs><radialGradient id="g1" cx="40%" cy="35%" r="65%"><stop offset="0" stop-color="#d8f4c8"/><stop offset="1" stop-color="#50a040"/></radialGradient></defs><circle cx="9" cy="9" r="8.3" fill="url(#g1)" stroke="#60a050" stroke-width="0.7"/><path d="M7 4 H11 V9 H13.5 L9 13.5 L4.5 9 H7 Z" fill="#fff" stroke="#508040" stroke-width="0.6"/></svg>
<div style="left:546px;top:253px;width:1px;height:13px;background:#000"></div>
<span style="left:519.5px;top:267.89px;font-size:8.4px;line-height:8.4px;color:#000;">Drop Activities</span>
<span style="left:537.7px;top:278.39px;font-size:8.4px;line-height:8.4px;color:#000;">Here</span>
<svg style="position:absolute;left:542px;top:289px;" width="9" height="13" viewBox="0 0 9 13"><path d="M4.5 0 V9" stroke="#000" stroke-width="1.1"/><path d="M1.5 8 L4.5 12.5 L7.5 8 Z" fill="#000"/></svg>
<svg style="position:absolute;left:539px;top:307px;" width="15" height="15" viewBox="0 0 15 15"><rect x="0" y="0" width="14" height="14" rx="1.5" fill="#d84020"/><circle cx="7" cy="7" r="4.2" fill="none" stroke="#fff" stroke-width="1.6"/></svg>
<div style="left:697px;top:187px;width:15px;height:447px;background:#d4d0c8"></div>
<div style="left:698px;top:188px;width:13px;height:11px;background:#d4d0c8;border-top:1px solid #fff;border-left:1px solid #fff;border-right:1px solid #404040;border-bottom:1px solid #404040;box-sizing:border-box;"></div>
<svg style="position:absolute;left:698px;top:188px;" width="13" height="11" viewBox="0 0 13 11"><path d="M3.5 7 H9.5 L6.5 4 Z" fill="#000"/></svg>
<div style="left:698px;top:199px;width:13px;height:417px;background:#d4d0c8;border-left:1px solid #fff;border-right:1px solid #808080;box-sizing:border-box"></div>
<div style="left:698px;top:616px;width:13px;height:13px;background:#d4d0c8;border-top:1px solid #fff;border-left:1px solid #fff;border-right:1px solid #404040;border-bottom:1px solid #404040;box-sizing:border-box;"></div>
<svg style="position:absolute;left:698px;top:616px;" width="13" height="13" viewBox="0 0 13 13"><path d="M3.5 5 H9.5 L6.5 8 Z" fill="#000"/></svg>
<div style="left:698px;top:629px;width:13px;height:4px;background:#d4d0c8;border-top:1px solid #fff;border-bottom:1px solid #404040;box-sizing:border-box"></div>
<div style="left:711px;top:187px;width:1px;height:447px;background:#808080"></div>
<div style="left:712px;top:185px;width:168px;height:452px;background:#d4d0c8"></div>
<svg style="position:absolute;left:722px;top:193px;" width="7" height="5" viewBox="0 0 7 5"><path d="M0.8 4.2 L3.5 1.2 L6.2 4.2" stroke="#000" stroke-width="1.4" fill="none"/></svg>
<span style="left:735.7px;top:192.52px;font-size:8.6px;line-height:8.6px;color:#000;">Properties</span>
<div style="left:724px;top:208px;width:17px;height:17px;background:#ece9e4;border:1px solid #c8c8c8;border-top-color:#a0a0a0;border-left-color:#a0a0a0;box-sizing:border-box"></div>
<svg style="position:absolute;left:726px;top:210px;" width="13" height="13" viewBox="0 0 13 13"><rect x="1" y="1" width="3" height="3" fill="none" stroke="#b0b0b0" stroke-width="0.8"/><rect x="1" y="8" width="3" height="3" fill="none" stroke="#b0b0b0" stroke-width="0.8"/><path d="M6 2 H12 M6 4 H12 M6 9 H12 M6 11 H10" stroke="#c0c0c0" stroke-width="0.8"/></svg>
<svg style="position:absolute;left:744px;top:210px;" width="13" height="14" viewBox="0 0 13 14"><text x="0" y="12" font-size="11" fill="#b8b8b8" font-family="Liberation Sans">2</text><path d="M10 1 V12 M8 9.5 L10 12 L12 9.5" stroke="#b0b0b0" stroke-width="1" fill="none"/></svg>
<div style="left:762px;top:209px;width:1px;height:16px;background:#a8a8a8"></div>
<div style="left:763px;top:209px;width:1px;height:16px;background:#fff"></div>
<svg style="position:absolute;left:767px;top:211px;" width="13" height="12" viewBox="0 0 13 12"><rect x="0.5" y="0.5" width="12" height="10" fill="#e8e8e8" stroke="#b0b0b0"/><path d="M3 4 H10 M3 7 H10" stroke="#b0b0b0" stroke-width="0.8"/></svg>
<div style="left:722px;top:225px;width:148px;height:1px;background:#a0a0a0"></div>
<div style="left:722px;top:227px;width:148px;height:124px;background:#fff;border-top:1px solid #a0a0a0;border-left:1px solid #a0a0a0;border-right:1px solid #a0a0a0;border-bottom:1px solid #a0a0a0;box-sizing:border-box"></div>
<div style="left:722px;top:353px;width:148px;height:47px;background:#d4d0c8;border:1px solid #a0a0a0;box-sizing:border-box"></div>
<svg style="position:absolute;left:722px;top:420px;" width="7" height="5" viewBox="0 0 7 5"><path d="M0.8 4.2 L3.5 1.2 L6.2 4.2" stroke="#000" stroke-width="1.4" fill="none"/></svg>
<span style="left:735.7px;top:418.92px;font-size:8.6px;line-height:8.6px;color:#000;">Configuration Sets</span>
<div style="left:724px;top:434px;width:17px;height:17px;background:#ece9e4;border:1px solid #c8c8c8;border-top-color:#a0a0a0;border-left-color:#a0a0a0;box-sizing:border-box"></div>
<svg style="position:absolute;left:726px;top:436px;" width="13" height="13" viewBox="0 0 13 13"><rect x="1" y="1" width="3" height="3" fill="none" stroke="#b0b0b0" stroke-width="0.8"/><rect x="1" y="8" width="3" height="3" fill="none" stroke="#b0b0b0" stroke-width="0.8"/><path d="M6 2 H12 M6 4 H12 M6 9 H12 M6 11 H10" stroke="#c0c0c0" stroke-width="0.8"/></svg>
<svg style="position:absolute;left:744px;top:436px;" width="13" height="14" viewBox="0 0 13 14"><text x="0" y="12" font-size="11" fill="#b8b8b8" font-family="Liberation Sans">2</text><path d="M10 1 V12 M8 9.5 L10 12 L12 9.5" stroke="#b0b0b0" stroke-width="1" fill="none"/></svg>
<div style="left:762px;top:435px;width:1px;height:16px;background:#a8a8a8"></div>
<div style="left:763px;top:435px;width:1px;height:16px;background:#fff"></div>
<svg style="position:absolute;left:767px;top:437px;" width="13" height="12" viewBox="0 0 13 12"><rect x="0.5" y="0.5" width="12" height="10" fill="#e8e8e8" stroke="#b0b0b0"/><path d="M3 4 H10 M3 7 H10" stroke="#b0b0b0" stroke-width="0.8"/></svg>
<div style="left:722px;top:451px;width:148px;height:1px;background:#a0a0a0"></div>
<div style="left:722px;top:452px;width:148px;height:106px;background:#fff;border:1px solid #a0a0a0;box-sizing:border-box"></div>
<div style="left:722px;top:559px;width:148px;height:48px;background:#d4d0c8;border:1px solid #a0a0a0;box-sizing:border-box"></div>
<div style="left:809px;top:616px;width:33px;height:18px;background:#d4d0c8;border-top:1px solid #fff;border-left:1px solid #fff;border-right:1px solid #404040;border-bottom:1px solid #404040;box-sizing:border-box;"></div>
<span style="left:813.4px;top:622.04px;font-size:8.1px;line-height:8.1px;color:#8c8c8c;">Cancel</span>
<div style="left:846px;top:616px;width:29px;height:18px;background:#d4d0c8;border-top:1px solid #fff;border-left:1px solid #fff;border-right:1px solid #404040;border-bottom:1px solid #404040;box-sizing:border-box;"></div>
<span style="left:850.7px;top:621.87px;font-size:8.3px;line-height:8.3px;color:#8c8c8c;">Apply</span>
<div style="left:254px;top:129px;width:1px;height:508px;background:#404040"></div>
<div style="left:255px;top:130px;width:1px;height:506px;background:#fff"></div>
<div style="left:254px;top:637px;width:626px;height:1px;background:#404040"></div>
<div style="left:879px;top:185px;width:1px;height:452px;background:#505050"></div>
<div style="left:880px;top:111px;width:3px;height:532px;background:#e4e2de"></div>
<div style="left:883px;top:110px;width:1px;height:533px;background:#606060"></div>
<div style="left:884px;top:110px;width:1px;height:533px;background:#8a8a8a"></div>
<div style="left:249px;top:644px;width:436px;height:1px;background:#fff"></div>
<div style="left:249px;top:647px;width:436px;height:1px;background:#606060"></div>
<div style="left:685px;top:643px;width:197px;height:5px;background:linear-gradient(90deg,#a8a8a8,#c8c8c8);border-top:1px solid #fff;border-left:1px solid #fff;box-sizing:border-box"></div>
<div style="left:689px;top:646px;width:13px;height:2px;background:#000080"></div>
<div style="left:885px;top:111px;width:275px;height:250px;background:#d4d0c8;border-top:1px solid #e8e8e8;border-left:1px solid #e8e8e8;border-bottom:1px solid #404040;box-sizing:border-box"></div>
<div style="left:886px;top:112px;width:274px;height:248px;border-top:1px solid #fff;border-left:1px solid #fff;border-bottom:1px solid #808080;box-sizing:border-box"></div>
<div style="left:887px;top:129px;width:1px;height:228px;background:#606060"></div>
<div style="left:887px;top:129px;width:271px;height:1px;background:#606060"></div>
<div style="left:888px;top:115px;width:270px;height:13px;background:linear-gradient(90deg,#808080 0%,#a0a0a0 60%,#b4b4b4 100%)"></div>
<span style="left:902.5px;top:116.50px;font-size:9.1px;line-height:9.1px;color:#d8d4cc;font-weight:bold;">Service Control Monitor</span>
<svg style="position:absolute;left:888px;top:115px;" width="13" height="12" viewBox="0 0 13 12"><rect x="0" y="0" width="13" height="12" fill="#fff"/><rect x="0" y="0" width="13" height="2" fill="#0000a0"/><path d="M0.5 2 V11.5" stroke="#000"/><rect x="2" y="4" width="4" height="3" fill="#808080"/><rect x="6.5" y="5.5" width="5" height="5" fill="#fff" stroke="#000" stroke-width="1.2"/></svg>
<div style="left:888px;top:130px;width:270px;height:24px;background:linear-gradient(180deg,#ffffff 0%,#f8f8f8 60%,#e8e8e8 100%)"></div>
<svg style="position:absolute;left:892px;top:136px;" width="14" height="12" viewBox="0 0 14 12"><path d="M0.5 3 H4 L5 4 H10 V11.5 H0.5 Z" fill="#e0b040" stroke="#a07010" stroke-width="0.7"/><path d="M0.5 11.5 L3 6 H13.5 L11 11.5 Z" fill="#f8d060" stroke="#a07010" stroke-width="0.7"/><path d="M7 3 Q10 0 12 3" stroke="#3060c0" fill="none" stroke-width="1"/></svg>
<svg style="position:absolute;left:913px;top:138px;" width="6" height="9" viewBox="0 0 6 9"><path d="M0 0 L5.5 4.5 L0 9 Z" fill="#c8d8c8"/></svg>
<svg style="position:absolute;left:929px;top:139px;" width="8" height="8" viewBox="0 0 8 8"><rect x="0.5" y="0.5" width="7" height="7" fill="#d8dcf0" stroke="#c0c4e0"/></svg>
<div style="left:888px;top:154px;width:270px;height:24px;background:#d4d0c8"></div>
<div style="left:890px;top:156px;width:47px;height:19px;background:#d4d0c8;border-top:1px solid #fff;border-left:1px solid #fff;box-sizing:border-box"></div>
<div style="left:936px;top:157px;width:1px;height:17px;background:#404040"></div>
<div style="left:937px;top:157px;width:56px;height:17px;background:#d4d0c8;border-top:1px solid #fff;border-right:1px solid #404040;box-sizing:border-box"></div>
<span style="left:899.7px;top:159.42px;font-size:8.6px;line-height:8.6px;color:#000;">Status</span>
<span style="left:946.5px;top:161.32px;font-size:8.6px;line-height:8.6px;color:#000;">Summary</span>
<div style="left:890px;top:174px;width:268px;height:1px;background:#fff"></div>
<div style="left:893px;top:178px;width:265px;height:158px;background:#fff;border-top:2px solid #404040;border-left:1px solid #404040;box-sizing:border-box"></div>
<div style="left:888px;top:335px;width:270px;height:1px;background:#404040"></div>
<div style="left:888px;top:356px;width:270px;height:1px;background:#404040"></div>
<span style="left:892.3px;top:342.52px;font-size:8.6px;line-height:8.6px;color:#000;">Script:</span>
<span style="left:921.5px;top:342.52px;font-size:8.6px;line-height:8.6px;color:#000;">Not Loaded</span>
<div style="left:885px;top:362px;width:275px;height:182px;background:#d4d0c8;border-top:1px solid #e8e8e8;border-left:1px solid #e8e8e8;border-bottom:1px solid #404040;box-sizing:border-box"></div>
<div style="left:886px;top:363px;width:274px;height:180px;border-top:1px solid #fff;border-left:1px solid #fff;border-bottom:1px solid #808080;box-sizing:border-box"></div>
<div style="left:888px;top:366px;width:270px;height:13px;background:linear-gradient(90deg,#808080 0%,#a0a0a0 60%,#b4b4b4 100%)"></div>
<span style="left:902.5px;top:367.50px;font-size:9.1px;line-height:9.1px;color:#d8d4cc;font-weight:bold;">Audio Indications</span>
<svg style="position:absolute;left:889px;top:366px;" width="13" height="12" viewBox="0 0 13 12"><rect x="0.5" y="0.5" width="12" height="11" fill="#fff" stroke="#000" stroke-width="1"/><rect x="0" y="0" width="13" height="1.5" fill="#000080"/><path d="M2.5 5 H4.5 L7.5 2.5 V10 L4.5 7.5 H2.5 Z" fill="#e8e020" stroke="#000" stroke-width="0.7"/><path d="M9 4.5 Q10.5 6.3 9 8" stroke="#000" stroke-width="0.7" fill="none"/></svg>
<div style="left:888px;top:379px;width:196px;height:22px;background:#d4d0c8;border-top:1px solid #fff;border-right:1px solid #808080;box-sizing:border-box"></div>
<svg style="position:absolute;left:892px;top:386px;" width="10" height="12" viewBox="0 0 10 12"><path d="M0.5 0.5 H6 L9.5 4 V11.5 H0.5 Z" fill="#fff" stroke="#000" stroke-width="0.9"/></svg>
<svg style="position:absolute;left:908px;top:386px;" width="14" height="12" viewBox="0 0 14 12"><path d="M0.5 3 H4 L5 4 H10 V11.5 H0.5 Z" fill="#c8c820" stroke="#000" stroke-width="0.8"/><path d="M0.5 11.5 L3 6.5 H13.5 L11 11.5 Z" fill="#f0f040" stroke="#000" stroke-width="0.8"/><path d="M7 3 Q10 0 12 3" stroke="#000" fill="none" stroke-width="0.9"/></svg>
<svg style="position:absolute;left:927px;top:386px;" width="12" height="12" viewBox="0 0 12 12"><rect x="0.5" y="0.5" width="11" height="11" fill="#000"/><rect x="2" y="1" width="8" height="5" fill="#808000"/><rect x="3" y="8" width="6" height="3" fill="#808080"/></svg>
<div style="left:944px;top:383px;width:2px;height:15px;border-left:1px solid #808080;border-right:1px solid #fff;box-sizing:border-box"></div>
<svg style="position:absolute;left:950px;top:385px;" width="14" height="13" viewBox="0 0 14 13"><path d="M0.5 0.5 H7 L10.5 4 V12.5 H0.5 Z" fill="#fff" stroke="#000" stroke-width="0.9"/><path d="M2 3.5 H4 M2 6 H4 M2 8.5 H4" stroke="#000" stroke-width="1.1"/><path d="M5 3.5 H8 M5 6 H8 M5 8.5 H8" stroke="#000" stroke-width="0.7"/><path d="M8 9.5 H13 M10.5 7 V12" stroke="#e0c000" stroke-width="1.6"/></svg>
<svg style="position:absolute;left:968px;top:385px;" width="14" height="13" viewBox="0 0 14 13"><path d="M0.5 0.5 H7 L10.5 4 V12.5 H0.5 Z" fill="#fff" stroke="#000" stroke-width="0.9"/><path d="M2 3.5 H4 M2 6 H4 M2 8.5 H4" stroke="#000" stroke-width="1.1"/><path d="M5 3.5 H8 M5 6 H8 M5 8.5 H8" stroke="#000" stroke-width="0.7"/><path d="M7 11 L12.5 3" stroke="#000" stroke-width="1.6"/><path d="M12 2 L13.5 1" stroke="#c08040" stroke-width="1.2"/></svg>
<svg style="position:absolute;left:986px;top:385px;" width="14" height="13" viewBox="0 0 14 13"><path d="M0.5 0.5 H7 L10.5 4 V12.5 H0.5 Z" fill="#fff" stroke="#000" stroke-width="0.9"/><path d="M2 3.5 H4 M2 6 H4 M2 8.5 H4" stroke="#000" stroke-width="1.1"/><path d="M5 3.5 H8 M5 6 H8 M5 8.5 H8" stroke="#000" stroke-width="0.7"/><path d="M8 9.5 H13.5" stroke="#e0c000" stroke-width="1.8"/></svg>
<div style="left:1004px;top:383px;width:2px;height:15px;border-left:1px solid #808080;border-right:1px solid #fff;box-sizing:border-box"></div>
<svg style="position:absolute;left:1011px;top:385px;" width="10" height="13" viewBox="0 0 10 13"><path d="M1 4.5 H3 L7 1 V12 L3 8.5 H1 Z" fill="#d4d0c8" stroke="#a0a0a0" stroke-width="0.9"/><path d="M8.5 5 V8" stroke="#fff" stroke-width="0.8"/></svg>
<svg style="position:absolute;left:1026px;top:385px;" width="12" height="13" viewBox="0 0 12 13"><path d="M4 4.5 H6 L10 1 V12 L6 8.5 H4 Z" fill="#f8f8f0" stroke="#404040" stroke-width="0.9"/><path d="M1 5 L7 12.5 M7 5 L1 12.5" stroke="#f01010" stroke-width="1.8"/></svg>
<div style="left:1044px;top:383px;width:2px;height:15px;border-left:1px solid #808080;border-right:1px solid #fff;box-sizing:border-box"></div>
<svg style="position:absolute;left:1049px;top:384px;" width="14" height="14" viewBox="0 0 14 14"><path d="M1 5 H4 L9 1.5 V13 L4 9.5 H1 Z" fill="#e8e040" stroke="#404000" stroke-width="0.9"/><circle cx="4" cy="3.5" r="2.8" fill="#30c030"/><path d="M10.5 4 Q13 7 10.5 10 M11.5 2 Q15 7 11.5 12" stroke="#404000" stroke-width="0.9" fill="none"/></svg>
<svg style="position:absolute;left:1066px;top:384px;" width="14" height="14" viewBox="0 0 14 14"><path d="M1 5 H4 L9 1.5 V13 L4 9.5 H1 Z" fill="#c8c8c8" stroke="#909090" stroke-width="0.9"/><path d="M10.5 4 Q13 7 10.5 10 M11.5 2 Q15 7 11.5 12" stroke="#909090" stroke-width="0.9" fill="none"/><path d="M2 2 L13 13" stroke="#a0a0a0" stroke-width="1"/></svg>
<div style="left:888px;top:401px;width:270px;height:1px;background:#808080"></div>
<div style="left:889px;top:402px;width:269px;height:124px;background:#fff;border-top:1px solid #404040;border-left:1px solid #404040;box-sizing:border-box"></div>
<div style="left:890px;top:403px;width:268px;height:13px;background:#d4d0c8;border-bottom:1px solid #808080;box-sizing:border-box"></div>
<div style="left:890px;top:403px;width:13px;height:13px;border-left:1px solid #fff;border-right:1px solid #808080;box-sizing:border-box"></div>
<div style="left:903px;top:403px;width:40px;height:13px;border-left:1px solid #fff;border-right:1px solid #808080;box-sizing:border-box"></div>
<div style="left:943px;top:403px;width:101px;height:13px;border-left:1px solid #fff;border-right:1px solid #808080;box-sizing:border-box"></div>
<div style="left:1044px;top:403px;width:114px;height:13px;border-left:1px solid #fff;border-right:1px solid #808080;box-sizing:border-box"></div>
<span style="left:908.7px;top:406.92px;font-size:8.6px;line-height:8.6px;color:#000;">Mobile</span>
<span style="left:947.8px;top:406.92px;font-size:8.6px;line-height:8.6px;color:#000;">Event</span>
<span style="left:1049.5px;top:406.92px;font-size:8.6px;line-height:8.6px;color:#000;">Sound</span>
<svg style="position:absolute;left:894px;top:417.7px;" width="10" height="12" viewBox="0 0 10 12"><path d="M1 3.5 H3.5 L7.5 0.5 V11.5 L3.5 8.5 H1 Z" fill="#e8d840" stroke="#605000" stroke-width="0.8"/><path d="M8.5 4 Q9.5 6 8.5 8" stroke="#605000" stroke-width="0.6" fill="none"/></svg>
<span style="left:908.7px;top:419.92px;font-size:8.6px;line-height:8.6px;color:#000;letter-spacing:0.5px">&lt;Any&gt;</span>
<span style="left:947.5px;top:420.09px;font-size:8.4px;line-height:8.4px;color:#000;">Authentication Failure</span>
<span style="left:1049.5px;top:420.09px;font-size:8.4px;line-height:8.4px;color:#000;">AuthFaild.wav</span>
<svg style="position:absolute;left:894px;top:431.09999999999997px;" width="10" height="12" viewBox="0 0 10 12"><path d="M1 3.5 H3.5 L7.5 0.5 V11.5 L3.5 8.5 H1 Z" fill="#e8d840" stroke="#605000" stroke-width="0.8"/><path d="M8.5 4 Q9.5 6 8.5 8" stroke="#605000" stroke-width="0.6" fill="none"/></svg>
<span style="left:908.7px;top:433.32px;font-size:8.6px;line-height:8.6px;color:#000;letter-spacing:0.5px">&lt;Any&gt;</span>
<span style="left:947.5px;top:433.49px;font-size:8.4px;line-height:8.4px;color:#000;">Blocked Call</span>
<span style="left:1049.5px;top:433.49px;font-size:8.4px;line-height:8.4px;color:#000;">BlockedCall.wav</span>
<svg style="position:absolute;left:894px;top:444.5px;" width="10" height="12" viewBox="0 0 10 12"><path d="M1 3.5 H3.5 L7.5 0.5 V11.5 L3.5 8.5 H1 Z" fill="#e8d840" stroke="#605000" stroke-width="0.8"/><path d="M8.5 4 Q9.5 6 8.5 8" stroke="#605000" stroke-width="0.6" fill="none"/></svg>
<span style="left:908.7px;top:446.72px;font-size:8.6px;line-height:8.6px;color:#000;letter-spacing:0.5px">&lt;Any&gt;</span>
<span style="left:947.5px;top:446.89px;font-size:8.4px;line-height:8.4px;color:#000;">Call Attempt</span>
<span style="left:1049.5px;top:446.89px;font-size:8.4px;line-height:8.4px;color:#000;">CallAtt.wav</span>
<svg style="position:absolute;left:894px;top:457.9px;" width="10" height="12" viewBox="0 0 10 12"><path d="M1 3.5 H3.5 L7.5 0.5 V11.5 L3.5 8.5 H1 Z" fill="#e8d840" stroke="#605000" stroke-width="0.8"/><path d="M8.5 4 Q9.5 6 8.5 8" stroke="#605000" stroke-width="0.6" fill="none"/></svg>
<span style="left:908.7px;top:460.12px;font-size:8.6px;line-height:8.6px;color:#000;letter-spacing:0.5px">&lt;Any&gt;</span>
<span style="left:947.5px;top:460.29px;font-size:8.4px;line-height:8.4px;color:#000;">Call Attempt Retry</span>
<span style="left:1049.5px;top:460.29px;font-size:8.4px;line-height:8.4px;color:#000;">CallAttemptRetry.wav</span>
<svg style="position:absolute;left:894px;top:471.3px;" width="10" height="12" viewBox="0 0 10 12"><path d="M1 3.5 H3.5 L7.5 0.5 V11.5 L3.5 8.5 H1 Z" fill="#e8d840" stroke="#605000" stroke-width="0.8"/><path d="M8.5 4 Q9.5 6 8.5 8" stroke="#605000" stroke-width="0.6" fill="none"/></svg>
<span style="left:908.7px;top:473.52px;font-size:8.6px;line-height:8.6px;color:#000;letter-spacing:0.5px">&lt;Any&gt;</span>
<span style="left:947.5px;top:473.69px;font-size:8.4px;line-height:8.4px;color:#000;">Call End</span>
<span style="left:1049.5px;top:473.69px;font-size:8.4px;line-height:8.4px;color:#000;">CallEnd.wav</span>
<svg style="position:absolute;left:894px;top:484.7px;" width="10" height="12" viewBox="0 0 10 12"><path d="M1 3.5 H3.5 L7.5 0.5 V11.5 L3.5 8.5 H1 Z" fill="#e8d840" stroke="#605000" stroke-width="0.8"/><path d="M8.5 4 Q9.5 6 8.5 8" stroke="#605000" stroke-width="0.6" fill="none"/></svg>
<span style="left:908.7px;top:486.92px;font-size:8.6px;line-height:8.6px;color:#000;letter-spacing:0.5px">&lt;Any&gt;</span>
<span style="left:947.5px;top:487.09px;font-size:8.4px;line-height:8.4px;color:#000;">Call Established</span>
<span style="left:1049.5px;top:487.09px;font-size:8.4px;line-height:8.4px;color:#000;">CallEstablished.wav</span>
<svg style="position:absolute;left:894px;top:498.1px;" width="10" height="12" viewBox="0 0 10 12"><path d="M1 3.5 H3.5 L7.5 0.5 V11.5 L3.5 8.5 H1 Z" fill="#e8d840" stroke="#605000" stroke-width="0.8"/><path d="M8.5 4 Q9.5 6 8.5 8" stroke="#605000" stroke-width="0.6" fill="none"/></svg>
<span style="left:908.7px;top:500.32px;font-size:8.6px;line-height:8.6px;color:#000;letter-spacing:0.5px">&lt;Any&gt;</span>
<span style="left:947.5px;top:500.49px;font-size:8.4px;line-height:8.4px;color:#000;">Call Initiation</span>
<span style="left:1049.5px;top:500.49px;font-size:8.4px;line-height:8.4px;color:#000;">CallInitiation a.wav</span>
<svg style="position:absolute;left:894px;top:511.5px;" width="10" height="12" viewBox="0 0 10 12"><path d="M1 3.5 H3.5 L7.5 0.5 V11.5 L3.5 8.5 H1 Z" fill="#e8d840" stroke="#605000" stroke-width="0.8"/><path d="M8.5 4 Q9.5 6 8.5 8" stroke="#605000" stroke-width="0.6" fill="none"/></svg>
<span style="left:908.7px;top:513.72px;font-size:8.6px;line-height:8.6px;color:#000;letter-spacing:0.5px">&lt;Any&gt;</span>
<span style="left:947.5px;top:513.89px;font-size:8.4px;line-height:8.4px;color:#000;">Call Setup</span>
<span style="left:1049.5px;top:513.89px;font-size:8.4px;line-height:8.4px;color:#000;">CallSetup.wav</span>
<div style="left:888px;top:525px;width:270px;height:13px;background:#d4d0c8;border-top:1px solid #fff;box-sizing:border-box"></div>
<div style="left:888px;top:538px;width:270px;height:1px;background:#404040"></div>
<div style="left:890px;top:526px;width:12px;height:12px;background:#d4d0c8;border-top:1px solid #fff;border-left:1px solid #fff;border-right:1px solid #404040;border-bottom:1px solid #404040;box-sizing:border-box;"></div>
<svg style="position:absolute;left:890px;top:526px;" width="12" height="12" viewBox="0 0 12 12"><path d="M7.5 3 V9 L4.5 6 Z" fill="#000"/></svg>
<div style="left:885px;top:544px;width:275px;height:116px;background:#d4d0c8;border-top:1px solid #e8e8e8;border-left:1px solid #e8e8e8;border-bottom:1px solid #404040;box-sizing:border-box"></div>
<div style="left:886px;top:545px;width:274px;height:114px;border-top:1px solid #fff;border-left:1px solid #fff;border-bottom:1px solid #808080;box-sizing:border-box"></div>
<div style="left:888px;top:549px;width:270px;height:13px;background:linear-gradient(90deg,#808080 0%,#a0a0a0 60%,#b4b4b4 100%)"></div>
<span style="left:902.5px;top:550.50px;font-size:9.1px;line-height:9.1px;color:#d8d4cc;font-weight:bold;">Event Definition</span>
<svg style="position:absolute;left:889px;top:549px;" width="13" height="12" viewBox="0 0 13 12"><rect x="0.5" y="0.5" width="12" height="11" fill="#fff" stroke="#000" stroke-width="1"/><rect x="0" y="0" width="13" height="1.5" fill="#000080"/><path d="M3.5 8.5 Q3.5 3.5 6.5 3 Q9.5 3.5 9.5 8.5 Z" fill="#f0e020" stroke="#000" stroke-width="0.7"/><rect x="2.5" y="8.5" width="8" height="1.2" fill="#000"/><path d="M6.5 9.5 L5.5 11 H7.5 Z" fill="#000"/></svg>
<div style="left:888px;top:564px;width:136px;height:21px;background:#d4d0c8;border-top:1px solid #fff;border-right:1px solid #fff;box-sizing:border-box"></div>
<svg style="position:absolute;left:890px;top:568px;" width="10" height="12" viewBox="0 0 10 12"><path d="M0.5 0.5 H6 L9.5 4 V11.5 H0.5 Z" fill="#fff" stroke="#000" stroke-width="0.9"/></svg>
<svg style="position:absolute;left:906px;top:568px;" width="14" height="12" viewBox="0 0 14 12"><path d="M0.5 3 H4 L5 4 H10 V11.5 H0.5 Z" fill="#c8c820" stroke="#000" stroke-width="0.8"/><path d="M0.5 11.5 L3 6.5 H13.5 L11 11.5 Z" fill="#f0f040" stroke="#000" stroke-width="0.8"/><path d="M7 3 Q10 0 12 3" stroke="#000" fill="none" stroke-width="0.9"/></svg>
<svg style="position:absolute;left:926px;top:568px;" width="12" height="12" viewBox="0 0 12 12"><rect x="0.5" y="0.5" width="11" height="11" fill="#909090"/><rect x="2" y="1" width="8" height="5" fill="#c8c8c8"/><rect x="3" y="8" width="6" height="3" fill="#808080"/></svg>
<div style="left:943px;top:566px;width:2px;height:17px;border-left:1px solid #808080;border-right:1px solid #fff;box-sizing:border-box"></div>
<svg style="position:absolute;left:948px;top:568px;" width="14" height="13" viewBox="0 0 14 13"><path d="M0.5 0.5 H7 L10.5 4 V12.5 H0.5 Z" fill="#fff" stroke="#000" stroke-width="0.9"/><path d="M2 3.5 H4 M2 6 H4 M2 8.5 H4" stroke="#000" stroke-width="1.1"/><path d="M5 3.5 H8 M5 6 H8 M5 8.5 H8" stroke="#000" stroke-width="0.7"/><path d="M8 9.5 H13 M10.5 7 V12" stroke="#e0c000" stroke-width="1.6"/></svg>
<svg style="position:absolute;left:967px;top:568px;" width="14" height="13" viewBox="0 0 14 13"><path d="M0.5 0.5 H7 L10.5 4 V12.5 H0.5 Z" fill="#fff" stroke="#a0a0a0" stroke-width="0.9"/><path d="M2 3.5 H4 M2 6 H4 M2 8.5 H4" stroke="#a0a0a0" stroke-width="1.1"/><path d="M5 3.5 H8 M5 6 H8 M5 8.5 H8" stroke="#a0a0a0" stroke-width="0.7"/><path d="M7 11 L12.5 3" stroke="#a0a0a0" stroke-width="1.6"/></svg>
<svg style="position:absolute;left:984px;top:568px;" width="14" height="13" viewBox="0 0 14 13"><path d="M0.5 0.5 H7 L10.5 4 V12.5 H0.5 Z" fill="#fff" stroke="#a0a0a0" stroke-width="0.9"/><path d="M2 3.5 H4 M2 6 H4 M2 8.5 H4" stroke="#a0a0a0" stroke-width="1.1"/><path d="M5 3.5 H8 M5 6 H8 M5 8.5 H8" stroke="#a0a0a0" stroke-width="0.7"/><path d="M8 9.5 H13.5 M10.8 7 V12" stroke="#b0b0b0" stroke-width="1.4"/></svg>
<div style="left:1001px;top:566px;width:2px;height:17px;border-left:1px solid #808080;border-right:1px solid #fff;box-sizing:border-box"></div>
<svg style="position:absolute;left:1006px;top:568px;" width="14" height="13" viewBox="0 0 14 13"><rect x="0.5" y="0.5" width="13" height="12" fill="#fff" stroke="#000" stroke-width="1"/><rect x="1" y="1" width="12" height="2" fill="#000080"/><path d="M3 5 L12 11.5" stroke="#000" stroke-width="1.3"/><path d="M2 6 L5 8 M7 4 L10 6" stroke="#c03050" stroke-width="0.9"/></svg>
<div style="left:888px;top:586px;width:270px;height:62px;background:#fff;border-top:1px solid #404040;border-left:1px solid #404040;box-sizing:border-box"></div>
<div style="left:889px;top:587px;width:269px;height:12px;background:#d4d0c8;border-bottom:1px solid #808080;box-sizing:border-box"></div>
<div style="left:889px;top:587px;width:46px;height:12px;border-left:1px solid #fff;border-right:1px solid #808080;box-sizing:border-box"></div>
<div style="left:935px;top:587px;width:47px;height:12px;border-left:1px solid #fff;border-right:1px solid #808080;box-sizing:border-box"></div>
<div style="left:982px;top:587px;width:101px;height:12px;border-left:1px solid #fff;border-right:1px solid #808080;box-sizing:border-box"></div>
<div style="left:1083px;top:587px;width:75px;height:12px;border-left:1px solid #fff;border-right:1px solid #808080;box-sizing:border-box"></div>
<span style="left:892.5px;top:589.22px;font-size:8.6px;line-height:8.6px;color:#000;">Mobile</span>
<span style="left:939.7px;top:589.22px;font-size:8.6px;line-height:8.6px;color:#000;">System</span>
<span style="left:986.5px;top:589.22px;font-size:8.6px;line-height:8.6px;color:#000;">Event</span>
<span style="left:1088.2px;top:589.22px;font-size:8.6px;line-height:8.6px;color:#000;">Expression</span>
<div style="left:1157px;top:110px;width:13px;height:538px;background:#d4d0c8"></div>
<div style="left:1157px;top:110px;width:12px;height:12px;background:#d4d0c8;border-top:1px solid #fff;border-left:1px solid #fff;border-right:1px solid #404040;border-bottom:1px solid #404040;box-sizing:border-box;"></div>
<svg style="position:absolute;left:1157px;top:110px;" width="12" height="12" viewBox="0 0 12 12"><path d="M3 7.5 H9 L6 4.5 Z" fill="#000"/></svg>
<div style="left:1157px;top:122px;width:12px;height:405px;background:#d4d0c8;border-left:1px solid #fff;border-top:1px solid #fff;border-right:1px solid #404040;border-bottom:1px solid #404040;box-sizing:border-box"></div>
<div style="left:1157px;top:527px;width:13px;height:109px;background-color:#e8e6e0;background-image:repeating-conic-gradient(#d4d0c8 0 25%,#fff 0 50%);background-size:2px 2px"></div>
<div style="left:1157px;top:636px;width:12px;height:12px;background:#d4d0c8;border-top:1px solid #fff;border-left:1px solid #fff;border-right:1px solid #404040;border-bottom:1px solid #404040;box-sizing:border-box;"></div>
<svg style="position:absolute;left:1157px;top:636px;" width="12" height="12" viewBox="0 0 12 12"><path d="M3 4.5 H9 L6 7.5 Z" fill="#000"/></svg>
<div style="left:249px;top:648px;width:921px;height:13px;background:#d4d0c8"></div>
<div style="left:249px;top:648px;width:11px;height:12px;background:#d4d0c8;border-top:1px solid #fff;border-left:1px solid #fff;border-right:1px solid #404040;border-bottom:1px solid #404040;box-sizing:border-box;"></div>
<svg style="position:absolute;left:249px;top:648px;" width="11" height="12" viewBox="0 0 11 12"><path d="M7 3 V9 L4 6 Z" fill="#000"/></svg>
<div style="left:260px;top:648px;width:792px;height:12px;background:#d4d0c8;border-left:1px solid #fff;border-top:1px solid #fff;border-right:1px solid #404040;border-bottom:1px solid #404040;box-sizing:border-box"></div>
<div style="left:1052px;top:648px;width:92px;height:12px;background-image:repeating-conic-gradient(#d4d0c8 0 25%,#fff 0 50%);background-size:2px 2px"></div>
<div style="left:1144px;top:648px;width:12px;height:12px;background:#d4d0c8;border-top:1px solid #fff;border-left:1px solid #fff;border-right:1px solid #404040;border-bottom:1px solid #404040;box-sizing:border-box;"></div>
<svg style="position:absolute;left:1144px;top:648px;" width="12" height="12" viewBox="0 0 12 12"><path d="M5 3 V9 L8 6 Z" fill="#000"/></svg>
<div style="left:1157px;top:648px;width:13px;height:13px;background:#d4d0c8"></div>
<div style="left:249px;top:661px;width:922px;height:1px;background:#303030"></div>
<div style="left:249px;top:662px;width:922px;height:13px;background:#c0c0c0"></div>
<div style="left:81px;top:675px;width:1090px;height:1px;background:#b0b0b0"></div>
<div style="left:81px;top:676px;width:1090px;height:1px;background:#fafafa"></div>
<div style="left:248px;top:661px;width:47px;height:13px;background:#d4d0c8;border-left:1px solid #fff;border-right:1px solid #404040;border-bottom:1px solid #404040;border-radius:0 0 3px 3px;box-sizing:border-box"></div>
<span style="left:254.5px;top:663.57px;font-size:8.3px;line-height:8.3px;color:#000;">Overview</span>
<div style="left:296px;top:661px;width:45px;height:13px;background:#d4d0c8;border-left:1px solid #fff;border-right:1px solid #404040;border-bottom:1px solid #404040;border-radius:0 0 3px 3px;box-sizing:border-box"></div>
<span style="left:301px;top:663.57px;font-size:8.3px;line-height:8.3px;color:#000;">Signaling</span>
<div style="left:342px;top:661px;width:29px;height:13px;background:#d4d0c8;border-left:1px solid #fff;border-right:1px solid #404040;border-bottom:1px solid #404040;border-radius:0 0 3px 3px;box-sizing:border-box"></div>
<span style="left:346px;top:663.57px;font-size:8.3px;line-height:8.3px;color:#000;">Data</span>
<div style="left:372px;top:661px;width:27px;height:13px;background:#d4d0c8;border-left:1px solid #fff;border-right:1px solid #404040;border-bottom:1px solid #404040;border-radius:0 0 3px 3px;box-sizing:border-box"></div>
<span style="left:376px;top:663.57px;font-size:8.3px;line-height:8.3px;color:#000;">Map</span>
<div style="left:399.5px;top:661px;width:41.5px;height:13px;background:#d4d0c8;border-left:1px solid #fff;border-right:1px solid #404040;border-bottom:1px solid #404040;border-radius:0 0 3px 3px;box-sizing:border-box"></div>
<span style="left:404px;top:663.57px;font-size:8.3px;line-height:8.3px;color:#000;">Scanner</span>
<div style="left:443.5px;top:661px;width:54.5px;height:13px;background:#909090;border-left:1px solid #fff;border-right:1px solid #404040;border-bottom:1px solid #404040;border-radius:0 0 3px 3px;box-sizing:border-box"></div>
<span style="left:447.7px;top:663.57px;font-size:8.3px;line-height:8.3px;color:#000;">Ctrl &amp; Config</span>
<span style="left:1258.4px;top:659.74px;font-size:9.4px;line-height:9.4px;color:#fff;font-weight:bold;">Test Mode</span>
<span style="left:1258px;top:671.15px;font-size:8.8px;line-height:8.8px;color:#fff;font-weight:bold;">Windows 7</span>
<span style="left:1266px;top:683.93px;font-size:8.0px;line-height:8.0px;color:#fff;">Build 7601</span>
<div style="left:56px;top:693px;width:1253px;height:35px;background:#d4d0c8"></div>
<div style="left:56px;top:694px;width:1253px;height:1px;background:#fff"></div>
<div style="left:57px;top:697px;width:41px;height:29px;background:#d4d0c8;border-top:1px solid #fff;border-left:1px solid #fff;border-right:1px solid #404040;border-bottom:1px solid #404040;box-sizing:border-box"></div>
<svg style="position:absolute;left:59px;top:705px;" width="13" height="12" viewBox="0 0 13 12"><g transform="translate(0.5 0.5) scale(0.88)"><path d="M1 3 Q4 1 6.5 2.5 L5.5 6.5 Q3 5 0 6.5 Z" fill="#f05020"/><path d="M7 2.8 Q10 4 13 2 L12 6 Q9 8 6 6.8 Z" fill="#60b020"/><path d="M0 7.5 Q3 6 5.3 7.5 L4.5 11.5 Q2 10 -0.5 11.5 Z" fill="#2090e0"/><path d="M6 7.8 Q9 9 12 7 L11 11 Q8 13 5 11.8 Z" fill="#f8c020"/></g></svg>
<span style="left:71.5px;top:706.83px;font-size:10px;line-height:10px;color:#000;font-weight:bold;">Start</span>
<div style="left:105px;top:697px;width:125px;height:29px;background:#d4d0c8;border-top:1px solid #fff;border-left:1px solid #fff;border-right:1px solid #404040;border-bottom:1px solid #404040;box-sizing:border-box"></div>
<svg style="position:absolute;left:110px;top:700px;" width="22" height="24" viewBox="0 0 22 24"><path d="M3 3 L10 1 V20 L3 22 Z" fill="#f0d890"/><path d="M10 3 L18 5 V22 L10 21 Z" fill="#e8c860"/><path d="M3 5 L13 4 L17 22 L6 23 Z" fill="#f8e8a8" opacity="0.9"/></svg>
<span style="left:136px;top:707.22px;font-size:8.6px;line-height:8.6px;color:#000;letter-spacing:-0.45px">KOMINFO</span>
<svg style="position:absolute;left:237px;top:699px;" width="27" height="26" viewBox="0 0 27 26"><ellipse cx="9" cy="13" rx="8" ry="6" fill="#f4f0f0" stroke="#e8b0b0" stroke-width="0.8"/><ellipse cx="10" cy="9" rx="8.5" ry="7" fill="#eceef8" stroke="#d03838" stroke-width="1.2"/><path d="M5 3 L14 15 M8 2 L13 15" stroke="#606060" stroke-width="1.4"/><path d="M13 15 Q10 19 11 23 Q13 25 14 21 Z" fill="#2088d0" stroke="#1060a0" stroke-width="0.6"/><path d="M14 15 Q19 16 21 20 Q19 22 16 19 Z" fill="#2088d0" stroke="#1060a0" stroke-width="0.6"/></svg>
<div style="left:271px;top:697px;width:126px;height:29px;background:#d4d0c8;border-top:1px solid #fff;border-left:1px solid #fff;border-right:1px solid #404040;border-bottom:1px solid #404040;box-sizing:border-box"></div>
<svg style="position:absolute;left:274px;top:699px;" width="25" height="25" viewBox="0 0 25 25"><defs><linearGradient id="ffg" x1="0" y1="0" x2="0.3" y2="1"><stop offset="0" stop-color="#ffb000"/><stop offset="0.5" stop-color="#ff5a20"/><stop offset="1" stop-color="#f0206a"/></linearGradient><radialGradient id="ffp" cx="50%" cy="35%" r="70%"><stop offset="0" stop-color="#a050f0"/><stop offset="1" stop-color="#5030c0"/></radialGradient></defs><circle cx="12.5" cy="14" r="11" fill="url(#ffg)"/><path d="M14 1 Q22 5 23.5 14 Q22 8 17 6 Z" fill="#ffd83a"/><circle cx="12.5" cy="13.5" r="5.8" fill="url(#ffp)"/><path d="M3 9 Q6 5 11 9 Q9 11 7 10.5 Q5 11 3 14 Z" fill="#ff9a10"/></svg>
<span style="left:302px;top:708.06px;font-size:8.2px;line-height:8.2px;color:#000;">Data DT 2G 3G 4G - G...</span>
<div style="left:399px;top:697px;width:125px;height:29px;background:#d4d0c8;border-top:1px solid #fff;border-left:1px solid #fff;border-right:1px solid #404040;border-bottom:1px solid #404040;box-sizing:border-box"></div>
<svg style="position:absolute;left:403px;top:701px;" width="22" height="22" viewBox="0 0 22 22"><rect x="0" y="0" width="22" height="22" rx="7" fill="#2d8cff"/><rect x="4.5" y="7.5" width="9" height="7" rx="1.5" fill="#fff"/><path d="M13.5 10 L17.5 7.5 V14.5 L13.5 12 Z" fill="#fff"/></svg>
<span style="left:428.7px;top:707.89px;font-size:8.4px;line-height:8.4px;color:#000;">Meeting Controls</span>
<div style="left:525px;top:697px;width:125px;height:29px;background-color:#fff;background-image:repeating-conic-gradient(#f4f4f4 0 25%,#fff 0 50%);background-size:2px 2px;border-top:1px solid #000;border-left:1px solid #000;border-right:1px solid #fff;border-bottom:1px solid #fff;box-sizing:border-box"></div>
<svg style="position:absolute;left:527px;top:699px;" width="26" height="25" viewBox="0 0 26 25"><rect x="0" y="0" width="26" height="25" fill="#2a4a80"/><circle cx="12" cy="11" r="8.5" fill="#d8ecf8" stroke="#f8f8f8" stroke-width="1.5"/><circle cx="10" cy="9" r="3" fill="#fff"/><path d="M17 2 V10 M20 2 V10" stroke="#e0b030" stroke-width="1.5"/><rect x="0" y="20" width="26" height="5" fill="#a0a8b8"/></svg>
<span style="left:556.5px;top:707.30px;font-size:9.1px;line-height:9.1px;color:#000;font-weight:bold;">TEMS Investigatio...</span>
<span style="left:1103.5px;top:705.32px;font-size:8.6px;line-height:8.6px;color:#000;">IN</span>
<div style="left:1118px;top:698px;width:2px;height:27px;border-left:1px solid #808080;border-right:1px solid #fff;box-sizing:border-box"></div>
<div style="left:1121px;top:697px;width:186px;height:28px;border-top:1px solid #808080;border-left:1px solid #808080;border-right:1px solid #fff;border-bottom:1px solid #fff;box-sizing:border-box"></div>
<svg style="position:absolute;left:1127px;top:706px;" width="11" height="11" viewBox="0 0 11 11"><rect x="0" y="0" width="11" height="11" rx="3.5" fill="#2d8cff"/><rect x="2" y="3.5" width="4.5" height="4" rx="0.8" fill="#fff"/><path d="M6.5 5 L9 3.5 V7.5 L6.5 6 Z" fill="#fff"/></svg>
<svg style="position:absolute;left:1145px;top:705px;" width="13" height="13" viewBox="0 0 13 13"><circle cx="7" cy="6" r="5.5" fill="#3080c0"/><path d="M2 5 Q7 2 12 5" stroke="#60c040" stroke-width="2.5" fill="none"/><path d="M3 9 H10 L6.5 12 Z" fill="#40b040"/></svg>
<svg style="position:absolute;left:1164px;top:705px;" width="14" height="14" viewBox="0 0 14 14"><path d="M1 1 V13" stroke="#707070" stroke-width="1.2"/><path d="M1.5 1.5 H9 L7.5 4 L9 6.5 H1.5" fill="#fff" stroke="#707070" stroke-width="0.8"/><circle cx="10" cy="10" r="3.3" fill="#e02020"/><path d="M8.5 8.5 L11.5 11.5 M11.5 8.5 L8.5 11.5" stroke="#fff" stroke-width="0.9"/></svg>
<svg style="position:absolute;left:1183px;top:705px;" width="12" height="13" viewBox="0 0 12 13"><path d="M2 3 H9 V10 H2 Z" fill="#fff" stroke="#606060" stroke-width="0.9"/><path d="M4 1 V3 M7 1 V3 M5.5 10 V13" stroke="#606060" stroke-width="1"/></svg>
<svg style="position:absolute;left:1201px;top:707px;" width="13" height="10" viewBox="0 0 13 10"><path d="M1 9 V8 M4 9 V6 M7 9 V4 M10 9 V2" stroke="#a0a0a0" stroke-width="2"/></svg>
<svg style="position:absolute;left:1220px;top:705px;" width="13" height="13" viewBox="0 0 13 13"><path d="M1 4.5 H3.5 L7 1.5 V11.5 L3.5 8.5 H1 Z" fill="#f0f0f0" stroke="#707070" stroke-width="0.8"/><path d="M8.5 4 Q10 6.5 8.5 9 M10 2.5 Q12.5 6.5 10 10.5" stroke="#707070" stroke-width="0.8" fill="none"/></svg>
<span style="left:1255px;top:700.92px;font-size:8.6px;line-height:8.6px;color:#000;">13:18</span>
<span style="left:1243px;top:712.62px;font-size:8.6px;line-height:8.6px;color:#000;">26/02/2021</span>
<svg style="position:absolute;left:1294px;top:706px;" width="12" height="11" viewBox="0 0 12 11"><rect x="0" y="0" width="12" height="9" fill="#2060c0"/><rect x="1" y="1" width="10" height="6" fill="#4090e0"/><rect x="0" y="9" width="12" height="2" fill="#80b0e0"/></svg>
<div style="left:0px;top:728px;width:1366px;height:40px;background:#1f1f1f"></div>
<svg style="position:absolute;left:16px;top:740px;" width="17" height="17" viewBox="0 0 17 17"><path d="M0 2.3 L7 1.3 V8 H0 Z M8 1.1 L17 0 V8 H8 Z M0 9 H7 V15.7 L0 14.7 Z M8 9 H17 V17 L8 15.9 Z" fill="#fff"/></svg>
<svg style="position:absolute;left:63px;top:740px;" width="18" height="17" viewBox="0 0 18 17"><circle cx="10.5" cy="6.5" r="5.3" fill="none" stroke="#fff" stroke-width="1.5"/><path d="M6.7 10.3 L1 16" stroke="#fff" stroke-width="1.7"/></svg>
<svg style="position:absolute;left:111px;top:740px;" width="18" height="16" viewBox="0 0 18 16"><rect x="2" y="2" width="10" height="12" fill="none" stroke="#fff" stroke-width="1.3"/><path d="M0 1 H14 M0 15 H14" stroke="#fff" stroke-width="1.2"/><rect x="15" y="4" width="3" height="3" fill="#fff"/><path d="M16.5 1 V3 M16.5 8 V15" stroke="#fff" stroke-width="1"/></svg>
<svg style="position:absolute;left:160px;top:737px;" width="22" height="22" viewBox="0 0 22 22"><path d="M20 13 H7 Q7.5 18 13 18 Q17 18 20 16 V20 Q17 22 12 22 Q2 22 1.5 12 Q1.5 2 11 1.5 Q20.5 1.5 20.5 10 Z M7 9 H14.5 Q14 5 11 5 Q7.8 5 7 9 Z" fill="#1683d8"/></svg>
<svg style="position:absolute;left:209px;top:737px;" width="23" height="22" viewBox="0 0 23 22"><path d="M0 3 H8 L10 5 H23 V20 H0 Z" fill="#f8c830"/><path d="M0 7 H23 V20 H0 Z" fill="#fcd860"/><rect x="7" y="12" width="9" height="4" fill="#1e90e0"/><rect x="9" y="16" width="5" height="4" fill="#1e90e0"/></svg>
<svg style="position:absolute;left:257px;top:736px;" width="24" height="25" viewBox="0 0 24 25"><path d="M8 6 Q8 1 12 1 Q16 1 16 6" stroke="#fff" stroke-width="1.6" fill="none"/><rect x="1" y="6" width="22" height="18" rx="1" fill="#fff"/><rect x="7" y="10" width="4.5" height="4.5" fill="#f25022"/><rect x="12.5" y="10" width="4.5" height="4.5" fill="#7fba00"/><rect x="7" y="15.5" width="4.5" height="4.5" fill="#00a4ef"/><rect x="12.5" y="15.5" width="4.5" height="4.5" fill="#ffb900"/></svg>
<svg style="position:absolute;left:306px;top:738px;" width="24" height="20" viewBox="0 0 24 20"><path d="M0 7 L12 0 L24 7 V20 H0 Z" fill="#fff"/><path d="M0 7 L12 14 L24 7" stroke="#1f1f1f" stroke-width="1.2" fill="none"/><path d="M2 18 L9 11" stroke="#1f1f1f" stroke-width="1"/></svg>
<svg style="position:absolute;left:357px;top:737px;" width="21" height="23" viewBox="0 0 21 23"><path d="M0 4 L13 0 L21 2 V21 L13 23 L0 19 L13 20.5 V3.5 L4 6 V17 L0 19 Z" fill="#e84a1a"/></svg>
<svg style="position:absolute;left:404px;top:736px;" width="25" height="25" viewBox="0 0 25 25"><circle cx="12.5" cy="12.5" r="11.5" fill="#e04030"/><path d="M12.5 12.5 L2.5 7 A11.5 11.5 0 0 1 22.5 7 Z" fill="#e04030"/><path d="M12.5 12.5 L22.5 7 A11.5 11.5 0 0 1 12.5 24 Z" fill="#f8c020"/><path d="M12.5 12.5 L12.5 24 A11.5 11.5 0 0 1 2.5 7 Z" fill="#30a050"/><circle cx="12.5" cy="12.5" r="5.2" fill="#fff"/><circle cx="12.5" cy="12.5" r="4.2" fill="#3080e8"/></svg>
<svg style="position:absolute;left:453px;top:735px;" width="27" height="28" viewBox="0 0 27 28"><circle cx="12" cy="12" r="10.5" fill="#fff"/><circle cx="12" cy="12" r="9" fill="#40c050"/><path d="M8 7 Q9 13 15 16 L16.5 14 L14 13 Q11 11 10 8.5 L11 7 Z" fill="#fff"/><path d="M2 22 L4 16 L8 20 Z" fill="#fff"/><circle cx="18.5" cy="19" r="7.3" fill="#e81818"/><text x="15.5" y="23.3" font-size="11.5" fill="#fff" font-family="Liberation Sans">1</text></svg>
<svg style="position:absolute;left:501px;top:737px;" width="25" height="23" viewBox="0 0 25 23"><circle cx="14" cy="11.5" r="10.5" fill="#f06040"/><path d="M14 11.5 V1 A10.5 10.5 0 0 1 24.5 11.5 Z" fill="#ff8f6b"/><rect x="0" y="4" width="14" height="15" rx="1.5" fill="#c43e1c"/><path d="M4 16 V7 H8 Q11 7 11 10 Q11 13 8 13 H4" stroke="#fff" stroke-width="1.8" fill="none"/></svg>
<svg style="position:absolute;left:552px;top:737px;" width="22" height="23" viewBox="0 0 22 23"><path d="M4 1 L20 4 L16 22 L0 19 Z" fill="#c8e8f8" stroke="#70a0c0" stroke-width="0.8"/><path d="M5 6 L17 8 M4 10 L16 12 M3 14 L15 16" stroke="#70a0c0" stroke-width="0.7"/></svg>
<div style="left:589px;top:728px;width:44px;height:40px;background:#3b3b3b"></div>
<div style="left:634px;top:728px;width:1px;height:40px;background:#3a3a3a"></div>
<svg style="position:absolute;left:598px;top:737px;" width="25" height="24" viewBox="0 0 25 24"><rect x="0" y="0" width="25" height="24" rx="8" fill="#2d8cff"/><rect x="5" y="8" width="10" height="8" rx="1.5" fill="#fff"/><path d="M15 11 L20 8 V16 L15 13 Z" fill="#fff"/></svg>
<svg style="position:absolute;left:649px;top:737px;" width="25" height="24" viewBox="0 0 25 24"><rect x="0" y="0" width="25" height="24" fill="#ef443b"/><path d="M5 12 L9.5 7.5 L14 12 L9.5 16.5 Z" fill="#fff"/><path d="M13.5 7.5 L18 12 L13.5 16.5" stroke="#fff" stroke-width="2.2" fill="none"/></svg>
<div style="left:151px;top:765px;width:40px;height:3px;background:#76b9ed"></div>
<div style="left:200px;top:765px;width:40px;height:3px;background:#76b9ed"></div>
<div style="left:396px;top:765px;width:39px;height:3px;background:#76b9ed"></div>
<div style="left:445px;top:765px;width:39px;height:3px;background:#76b9ed"></div>
<div style="left:493px;top:765px;width:40px;height:3px;background:#76b9ed"></div>
<div style="left:542px;top:765px;width:40px;height:3px;background:#76b9ed"></div>
<div style="left:589px;top:765px;width:44px;height:3px;background:#76b9ed"></div>
<div style="left:638px;top:765px;width:42px;height:3px;background:#76b9ed"></div>
<svg style="position:absolute;left:1104px;top:743px;" width="13" height="8" viewBox="0 0 13 8"><path d="M1 7 L6.5 1.5 L12 7" stroke="#fff" stroke-width="1.3" fill="none"/></svg>
<svg style="position:absolute;left:1126px;top:740px;" width="18" height="17" viewBox="0 0 18 17"><path d="M3 10 Q1 10 1 7.5 Q1 5 4 5 Q5 1.5 9 1.5 Q13 1.5 13.5 5.5 Q16 6 16 8.5" fill="#a0a0a0"/><path d="M2 10 H12" stroke="#a0a0a0" stroke-width="2"/><circle cx="12" cy="12" r="5" fill="#e02020"/><path d="M10 10 L14 14 M14 10 L10 14" stroke="#fff" stroke-width="1.2"/></svg>
<svg style="position:absolute;left:1153px;top:739px;" width="11" height="20" viewBox="0 0 11 20"><rect x="2.5" y="0.5" width="6" height="11" rx="3" fill="#fff"/><path d="M1 8 Q1 14 5.5 14 Q10 14 10 8" stroke="#fff" stroke-width="1.3" fill="none"/><path d="M5.5 14 V18 M2.5 18.5 H8.5" stroke="#fff" stroke-width="1.3"/></svg>
<svg style="position:absolute;left:1175px;top:741px;" width="16" height="14" viewBox="0 0 16 14"><rect x="4" y="4" width="11" height="7" fill="none" stroke="#fff" stroke-width="1.3"/><rect x="6" y="6" width="5" height="3" fill="#fff"/><path d="M1 7.5 H4 M2 3 V6" stroke="#fff" stroke-width="1.3"/></svg>
<svg style="position:absolute;left:1199px;top:740px;" width="15" height="16" viewBox="0 0 15 16"><path d="M1 15 Q1 1 14 1 M4 15 Q4 4 14 4 M7 15 Q7 7 14 7 M10 15 Q10 10 14 10" stroke="#fff" stroke-width="1.3" fill="none"/><path d="M13 13 H15 V15 H13 Z" fill="#fff"/></svg>
<svg style="position:absolute;left:1222px;top:740px;" width="16" height="16" viewBox="0 0 16 16"><path d="M1 5.5 H4 L8 2 V14 L4 10.5 H1 Z" fill="none" stroke="#fff" stroke-width="1.2"/><path d="M10 5 Q12 8 10 11 M12 3 Q15.5 8 12 13" stroke="#fff" stroke-width="1.2" fill="none"/></svg>
<span style="left:1263.6px;top:734.32px;font-size:11.2px;line-height:11.2px;color:#fff;">13:18</span>
<span style="left:1248.6px;top:750.18px;font-size:11.6px;line-height:11.6px;color:#fff;">26/02/2021</span>
<div style="left:1361px;top:728px;width:1px;height:40px;background:#5a5a5a"></div>
<svg style="position:absolute;left:1323px;top:739px;" width="28" height="26" viewBox="0 0 28 26"><path d="M1 1 H17 V12 H8 L4.5 15.5 V12 H1 Z" fill="#fff"/><path d="M4 4.5 H14 M4 7.5 H12" stroke="#1f1f1f" stroke-width="1.2"/><circle cx="19" cy="17" r="7" fill="#2a2a2a" stroke="#9a9a9a" stroke-width="1.1"/><text x="15.6" y="21.3" font-size="11.5" fill="#fff" font-family="Liberation Sans" font-weight="bold">3</text></svg>
<svg style="position:absolute;left:800px;top:46px;" width="9" height="21" viewBox="0 0 9 21"><path d="M4.5 1.5 L7.5 5 H5.4 V15 H7.5 L4.5 18.8 L1.5 15 H3.6 V5 H1.5 Z" fill="#fff" stroke="#000" stroke-width="0.8" stroke-linejoin="round"/></svg>
</body></html>
